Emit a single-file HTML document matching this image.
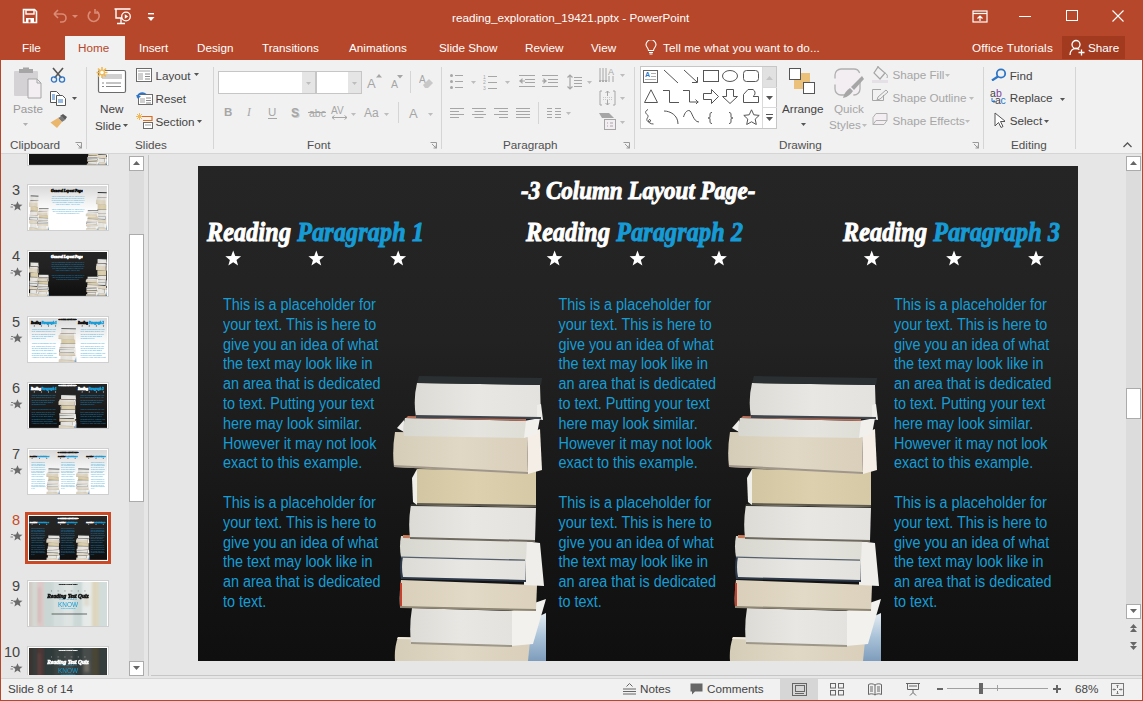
<!DOCTYPE html>
<html><head><meta charset="utf-8">
<style>
*{margin:0;padding:0;box-sizing:border-box}
html,body{width:1143px;height:701px;overflow:hidden;background:#B7472A;font-family:"Liberation Sans",sans-serif;position:relative}
.a{position:absolute}
.t{position:absolute;white-space:nowrap}
</style></head><body>
<div class="a" style="left:1px;top:60px;width:1141px;height:640px;background:#E6E6E6"></div>
<div class="a" style="left:1px;top:60px;width:1141px;height:94px;background:#F1F1F1;border-bottom:1px solid #D5D5D5"></div>
<div class="a" style="left:1062px;top:36px;width:63px;height:23px;background:#A23A20"></div><svg class="a" style="left:22px;top:8px" width="16" height="16" viewBox="0 0 16 16"><path d="M1.5 1.5h11l2 2v11h-13z" fill="none" stroke="#fff" stroke-width="1.6"/><rect x="4" y="2" width="8" height="4" fill="none" stroke="#fff" stroke-width="1.4"/><rect x="4" y="10" width="8" height="5" fill="#fff"/><rect x="6.5" y="11.5" width="2" height="3" fill="#B7472A"/></svg><svg class="a" style="left:51px;top:8px" width="28" height="16" viewBox="0 0 28 16"><path d="M3 6h8a4 4 0 0 1 0 8h-2M3 6l4-4M3 6l4 4" fill="none" stroke="#D98B76" stroke-width="1.6"/><path d="M21 7l3 3 3-3z" fill="#D98B76"/></svg><svg class="a" style="left:86px;top:8px" width="16" height="16" viewBox="0 0 16 16"><path d="M10.5 3.2A5.5 5.5 0 1 1 4.5 3.5" fill="none" stroke="#D98B76" stroke-width="1.6"/><path d="M9 1v4h4" fill="none" stroke="#D98B76" stroke-width="1.6"/></svg><svg class="a" style="left:114px;top:8px" width="18" height="17" viewBox="0 0 18 17"><path d="M0.5 1h16M2 1v9h6" fill="none" stroke="#fff" stroke-width="1.4"/><circle cx="12" cy="8.5" r="4.3" fill="none" stroke="#fff" stroke-width="1.3"/><path d="M10.8 6.3v4.4l3.4-2.2z" fill="#fff"/><path d="M3 15.5h8M7 10v5" fill="none" stroke="#fff" stroke-width="1.3"/></svg><svg class="a" style="left:147px;top:13px" width="8" height="9" viewBox="0 0 8 9"><rect x="1" y="0" width="6" height="1.4" fill="#fff"/><path d="M0.5 4h7l-3.5 4z" fill="#fff"/></svg><div class="t" style="left:452px;top:12.30px;font-size:11.7px;line-height:11.7px;color:#fff;">reading_exploration_19421.pptx - PowerPoint</div><svg class="a" style="left:972px;top:10px" width="16" height="13" viewBox="0 0 16 13"><rect x="1" y="1" width="14" height="11" fill="none" stroke="#fff" stroke-width="1.2"/><path d="M1 3.5h14" stroke="#fff" stroke-width="1.2"/><path d="M8 11V6M5.5 8.5L8 6l2.5 2.5" fill="none" stroke="#fff" stroke-width="1.2"/></svg><div class="a" style="left:1019px;top:16px;width:12px;height:1px;background:#fff"></div><div class="a" style="left:1066px;top:10px;width:12px;height:11px;border:1px solid #fff"></div><svg class="a" style="left:1112px;top:10px" width="12" height="12" viewBox="0 0 12 12"><path d="M0.5 0.5l11 11M11.5 0.5l-11 11" stroke="#fff" stroke-width="1.1"/></svg><div class="a" style="left:65px;top:36px;width:60px;height:24px;background:#F1F1F1"></div><div class="t" style="left:22px;top:41.90px;font-size:11.7px;line-height:11.7px;color:#fff;">File</div><div class="t" style="left:139px;top:41.90px;font-size:11.7px;line-height:11.7px;color:#fff;">Insert</div><div class="t" style="left:197px;top:41.90px;font-size:11.7px;line-height:11.7px;color:#fff;">Design</div><div class="t" style="left:262px;top:41.90px;font-size:11.7px;line-height:11.7px;color:#fff;">Transitions</div><div class="t" style="left:349px;top:41.90px;font-size:11.7px;line-height:11.7px;color:#fff;">Animations</div><div class="t" style="left:439px;top:41.90px;font-size:11.7px;line-height:11.7px;color:#fff;">Slide Show</div><div class="t" style="left:525px;top:41.90px;font-size:11.7px;line-height:11.7px;color:#fff;">Review</div><div class="t" style="left:591px;top:41.90px;font-size:11.7px;line-height:11.7px;color:#fff;">View</div><div class="t" style="left:1088px;top:41.90px;font-size:11.7px;line-height:11.7px;color:#fff;">Share</div><div class="t" style="left:663px;top:41.90px;font-size:11.7px;line-height:11.7px;color:#fff;letter-spacing:0.1px">Tell me what you want to do...</div><div class="t" style="left:972px;top:41.90px;font-size:11.7px;line-height:11.7px;color:#fff;letter-spacing:0.2px">Office Tutorials</div><div class="t" style="left:78px;top:41.90px;font-size:11.7px;line-height:11.7px;color:#B7472A;">Home</div><svg class="a" style="left:645px;top:40px" width="12" height="15" viewBox="0 0 12 15"><path d="M3.5 10.5C3.5 8 1 7 1 4.8A5 5 0 0 1 11 4.8C11 7 8.5 8 8.5 10.5z" fill="none" stroke="#fff" stroke-width="1.1"/><path d="M4 12.5h4M4.5 14h3" stroke="#fff" stroke-width="1.1"/></svg><svg class="a" style="left:1069px;top:39px" width="16" height="17" viewBox="0 0 16 17"><circle cx="7" cy="5.5" r="4" fill="none" stroke="#fff" stroke-width="1.3"/><path d="M1 16c0-4 2.5-6.5 6-6.5 1.5 0 2.5.4 3.3 1" fill="none" stroke="#fff" stroke-width="1.3"/><path d="M12.5 10.5v6M9.5 13.5h6" stroke="#fff" stroke-width="1.3"/></svg>
<div class="a" style="left:86px;top:67px;width:1px;height:82px;background:#D5D5D5"></div><div class="a" style="left:213px;top:67px;width:1px;height:82px;background:#D5D5D5"></div><div class="a" style="left:441px;top:67px;width:1px;height:82px;background:#D5D5D5"></div><div class="a" style="left:634px;top:67px;width:1px;height:82px;background:#D5D5D5"></div><div class="a" style="left:983px;top:67px;width:1px;height:82px;background:#D5D5D5"></div><div class="a" style="left:1075px;top:67px;width:1px;height:82px;background:#D5D5D5"></div><div class="t" style="left:10px;top:138.60px;font-size:11.7px;line-height:11.7px;color:#505050;">Clipboard</div><div class="t" style="left:135px;top:138.60px;font-size:11.7px;line-height:11.7px;color:#505050;">Slides</div><div class="t" style="left:307px;top:138.60px;font-size:11.7px;line-height:11.7px;color:#505050;">Font</div><div class="t" style="left:503px;top:138.60px;font-size:11.7px;line-height:11.7px;color:#505050;">Paragraph</div><div class="t" style="left:779px;top:138.60px;font-size:11.7px;line-height:11.7px;color:#505050;">Drawing</div><div class="t" style="left:1011px;top:138.60px;font-size:11.7px;line-height:11.7px;color:#505050;">Editing</div><svg class="a" style="left:75px;top:142px" width="7" height="7" viewBox="0 0 7 7"><path d="M0.5 0.5h6v6" fill="none" stroke="#999" stroke-width="1"/><path d="M2 2l4 4M6 3.5V6H3.5" fill="none" stroke="#999"/></svg><svg class="a" style="left:430px;top:142px" width="7" height="7" viewBox="0 0 7 7"><path d="M0.5 0.5h6v6" fill="none" stroke="#999" stroke-width="1"/><path d="M2 2l4 4M6 3.5V6H3.5" fill="none" stroke="#999"/></svg><svg class="a" style="left:623px;top:142px" width="7" height="7" viewBox="0 0 7 7"><path d="M0.5 0.5h6v6" fill="none" stroke="#999" stroke-width="1"/><path d="M2 2l4 4M6 3.5V6H3.5" fill="none" stroke="#999"/></svg><svg class="a" style="left:972px;top:142px" width="7" height="7" viewBox="0 0 7 7"><path d="M0.5 0.5h6v6" fill="none" stroke="#999" stroke-width="1"/><path d="M2 2l4 4M6 3.5V6H3.5" fill="none" stroke="#999"/></svg><svg class="a" style="left:13px;top:67px" width="30" height="32" viewBox="0 0 30 32"><rect x="1" y="4" width="24" height="25" rx="1" fill="#D4D2D4"/><path d="M6 6h14V2h-4V0.5h-6V2H6z" fill="#A6A6A6"/><path d="M15 12h9l4 4v15H15z" fill="#F2EEF2" stroke="#A6A6A6" stroke-width="1"/><path d="M24 12v4h4" fill="none" stroke="#A6A6A6"/></svg><div class="t" style="left:13px;top:102.90px;font-size:11.7px;line-height:11.7px;color:#999;">Paste</div><svg class="a" style="left:23px;top:123px" width="5" height="3" viewBox="0 0 5 3"><path d="M0 0h5l-2.5 3z" fill="#B0B0B0"/></svg><svg class="a" style="left:50px;top:67px" width="16" height="16" viewBox="0 0 16 16"><path d="M3 1l8.5 10M13 1L4.5 11" stroke="#555" stroke-width="1.6"/><circle cx="4" cy="12.5" r="2.6" fill="none" stroke="#2E75C6" stroke-width="1.3"/><circle cx="12" cy="12.5" r="2.6" fill="none" stroke="#2E75C6" stroke-width="1.3"/></svg><svg class="a" style="left:50px;top:91px" width="16" height="15" viewBox="0 0 16 15"><path d="M0.5 0.5h6l3 3v8H0.5z" fill="#fff" stroke="#555"/><path d="M6.5 4.5h6l3 3v7h-9z" fill="#fff" stroke="#555"/><path d="M2 4h3M2 6h3M2 8h3M8 9h5M8 11h5" stroke="#2E75C6"/></svg><svg class="a" style="left:72px;top:97px" width="5" height="3" viewBox="0 0 5 3"><path d="M0 0h5l-2.5 3z" fill="#555"/></svg><svg class="a" style="left:50px;top:114px" width="17" height="14" viewBox="0 0 17 14"><path d="M10 2l3-2 4 3-2 3z" fill="#595959"/><path d="M8 4l4-2 3 4-3 2z" fill="#7a7a7a"/><path d="M0.5 8.5l7.5-4.5 4 4-5 6z" fill="#E9B66B"/></svg><svg class="a" style="left:96px;top:66px" width="31" height="28" viewBox="0 0 31 28"><rect x="2.5" y="4.5" width="27" height="22" rx="1.5" fill="#fff" stroke="#6b6b6b" stroke-width="1.2"/><rect x="6" y="8" width="20" height="5" fill="#D0D0D0"/><path d="M6 17h2M10 17h15M6 20.5h2M10 20.5h15" stroke="#888" stroke-width="1"/><g stroke="#F0B955" stroke-width="1.6"><path d="M6 1v11M0.5 6.5h11M2 2.5l8 8M10 2.5l-8 8"/></g><circle cx="6" cy="6.5" r="2.4" fill="#fff" stroke="#F0B955" stroke-width="1.2"/></svg><div class="t" style="left:100px;top:103.00px;font-size:11.7px;line-height:11.7px;color:#444;">New</div><div class="t" style="left:95px;top:119.50px;font-size:11.7px;line-height:11.7px;color:#444;">Slide</div><svg class="a" style="left:123px;top:124px" width="5" height="3" viewBox="0 0 5 3"><path d="M0 0h5l-2.5 3z" fill="#555"/></svg><svg class="a" style="left:136px;top:68px" width="16" height="14" viewBox="0 0 16 14"><rect x="0.5" y="0.5" width="15" height="13" fill="#fff" stroke="#6b6b6b"/><rect x="2" y="2" width="12" height="2" fill="#D0D0D0"/><rect x="2" y="5" width="5" height="7" fill="#D0D0D0"/><path d="M9 6h5M9 8.5h5M9 11h5" stroke="#888"/></svg><div class="t" style="left:155.5px;top:70.00px;font-size:11.7px;line-height:11.7px;color:#444;">Layout</div><svg class="a" style="left:194px;top:73px" width="5" height="3" viewBox="0 0 5 3"><path d="M0 0h5l-2.5 3z" fill="#555"/></svg><svg class="a" style="left:136px;top:91px" width="17" height="14" viewBox="0 0 17 14"><rect x="2.5" y="3.5" width="14" height="10" fill="#fff" stroke="#6b6b6b"/><rect x="4" y="7" width="5" height="5" fill="#D0D0D0"/><path d="M10 7h5M10 9.5h5M10 12h5" stroke="#888"/><path d="M1.5 6.5C2 2 7 1 10 3.5" fill="none" stroke="#2E75C6" stroke-width="1.6"/><path d="M0 4l2 4 3-3z" fill="#2E75C6"/></svg><div class="t" style="left:155.5px;top:93.10px;font-size:11.7px;line-height:11.7px;color:#444;">Reset</div><svg class="a" style="left:136px;top:113px" width="17" height="16" viewBox="0 0 17 16"><g stroke="#F0B955" stroke-width="1"><path d="M3.5 0v7M0 3.5h7M1 1l5 5M6 1l-5 5"/></g><path d="M6 3.5h10v4H7" fill="none" stroke="#E06C1B" stroke-width="1.2"/><rect x="7.5" y="9.5" width="9" height="6" fill="#fff" stroke="#6b6b6b"/><rect x="9" y="11" width="6" height="2" fill="#D0D0D0"/></svg><div class="t" style="left:155.5px;top:115.90px;font-size:11.7px;line-height:11.7px;color:#444;">Section</div><svg class="a" style="left:197px;top:120px" width="5" height="3" viewBox="0 0 5 3"><path d="M0 0h5l-2.5 3z" fill="#555"/></svg><div class="a" style="left:218px;top:71px;width:98px;height:23px;background:#fff;border:1px solid #C6C6C6"></div><div class="a" style="left:302px;top:72px;width:13px;height:21px;background:#E5E5E5"></div><svg class="a" style="left:306px;top:82px" width="5" height="3" viewBox="0 0 5 3"><path d="M0 0h5l-2.5 3z" fill="#BDBDBD"/></svg><div class="a" style="left:316px;top:71px;width:46px;height:23px;background:#fff;border:1px solid #C6C6C6"></div><div class="a" style="left:348px;top:72px;width:13px;height:21px;background:#E5E5E5"></div><svg class="a" style="left:352px;top:82px" width="5" height="3" viewBox="0 0 5 3"><path d="M0 0h5l-2.5 3z" fill="#BDBDBD"/></svg><div class="t" style="left:367px;top:77.00px;font-size:13px;line-height:13px;color:#A6A6A6;">A</div><svg class="a" style="left:376px;top:74px" width="6" height="4" viewBox="0 0 6 4"><path d="M0 3.5L3 0l3 3.5z" fill="#A6A6A6"/></svg><div class="t" style="left:391px;top:79.11px;font-size:10.5px;line-height:10.5px;color:#A6A6A6;">A</div><svg class="a" style="left:397px;top:75px" width="6" height="4" viewBox="0 0 6 4"><path d="M0 0h6L3 3.5z" fill="#A6A6A6"/></svg><div class="a" style="left:410px;top:71px;width:1px;height:22px;background:#D5D5D5"></div><svg class="a" style="left:419px;top:74px" width="15" height="15" viewBox="0 0 15 15"><text x="0" y="9" font-family="Liberation Sans" font-size="10" fill="#A6A6A6">A</text><path d="M4 11l6-6 4 4-5 5H6z" fill="#C8C8C8"/></svg><div class="t" style="left:224px;top:107.27px;font-size:11.5px;line-height:11.5px;color:#A6A6A6;font-weight:bold">B</div><div class="t" style="left:247px;top:107.27px;font-size:11.5px;line-height:11.5px;color:#A6A6A6;font-style:italic;font-family:Liberation Serif">I</div><div class="t" style="left:268px;top:107.27px;font-size:11.5px;line-height:11.5px;color:#A6A6A6;">U</div><div class="a" style="left:268px;top:118px;width:9px;height:1px;background:#A6A6A6"></div><div class="t" style="left:292px;top:108.34px;font-size:12px;line-height:12px;color:#C9C9C9;font-weight:bold">S</div><div class="t" style="left:291px;top:106.84px;font-size:12px;line-height:12px;color:#A6A6A6;font-weight:bold">S</div><div class="t" style="left:309px;top:108.11px;font-size:10.5px;line-height:10.5px;color:#A6A6A6;">abc</div><div class="a" style="left:308px;top:112px;width:18px;height:1px;background:#A6A6A6"></div><div class="t" style="left:331px;top:105.53px;font-size:10px;line-height:10px;color:#A6A6A6;">AV</div><svg class="a" style="left:331px;top:115px" width="17" height="5" viewBox="0 0 17 5"><path d="M1 2.5h15M3.5 0.5L1 2.5l2.5 2M13.5 0.5L16 2.5l-2.5 2" fill="none" stroke="#A6A6A6"/></svg><svg class="a" style="left:351px;top:113px" width="5" height="3" viewBox="0 0 5 3"><path d="M0 0h5l-2.5 3z" fill="#BDBDBD"/></svg><div class="t" style="left:364px;top:106.84px;font-size:12px;line-height:12px;color:#A6A6A6;">Aa</div><svg class="a" style="left:384px;top:113px" width="5" height="3" viewBox="0 0 5 3"><path d="M0 0h5l-2.5 3z" fill="#BDBDBD"/></svg><div class="a" style="left:398px;top:102px;width:1px;height:21px;background:#D5D5D5"></div><div class="t" style="left:409px;top:107.00px;font-size:13px;line-height:13px;color:#A6A6A6;">A</div><svg class="a" style="left:428px;top:113px" width="5" height="3" viewBox="0 0 5 3"><path d="M0 0h5l-2.5 3z" fill="#BDBDBD"/></svg><svg class="a" style="left:450px;top:74px" width="13" height="15" viewBox="0 0 13 15"><g fill="#A6A6A6"><circle cx="1.5" cy="1.5" r="1.5"/><circle cx="1.5" cy="7.5" r="1.5"/><circle cx="1.5" cy="13.5" r="1.5"/></g><path d="M5 1.5h8M5 7.5h8M5 13.5h8" stroke="#A6A6A6"/></svg><svg class="a" style="left:471px;top:81px" width="5" height="3" viewBox="0 0 5 3"><path d="M0 0h5l-2.5 3z" fill="#BDBDBD"/></svg><svg class="a" style="left:483px;top:74px" width="15" height="16" viewBox="0 0 15 16"><text x="0" y="5" font-size="5" font-family="Liberation Sans" fill="#A6A6A6">1</text><text x="0" y="10" font-size="5" font-family="Liberation Sans" fill="#A6A6A6">2</text><text x="0" y="15.5" font-size="5" font-family="Liberation Sans" fill="#A6A6A6">3</text><path d="M5 2.5h9M5 8.5h9M5 14.5h9" stroke="#A6A6A6"/></svg><svg class="a" style="left:505px;top:81px" width="5" height="3" viewBox="0 0 5 3"><path d="M0 0h5l-2.5 3z" fill="#BDBDBD"/></svg><svg class="a" style="left:519px;top:74px" width="17" height="14" viewBox="0 0 17 14"><path d="M0 1.5h16M6 5.5h10M6 8.5h10M0 12.5h16" stroke="#A6A6A6"/><path d="M0 7l3.5-3v6z" fill="#A6A6A6"/><path d="M3 7h3" stroke="#A6A6A6"/></svg><svg class="a" style="left:542px;top:74px" width="17" height="14" viewBox="0 0 17 14"><path d="M0 1.5h16M6 5.5h10M6 8.5h10M0 12.5h16" stroke="#A6A6A6"/><path d="M5 7l-3.5-3v6z" fill="#A6A6A6"/><path d="M0 7h3" stroke="#A6A6A6"/></svg><svg class="a" style="left:567px;top:74px" width="15" height="16" viewBox="0 0 15 16"><path d="M3 1v14M0.5 3.5L3 1l2.5 2.5M0.5 12.5L3 15l2.5-2.5" fill="none" stroke="#A6A6A6" stroke-width="1.2"/><path d="M7 3.5h8M7 6.5h8M7 9.5h8M7 12.5h8" stroke="#A6A6A6"/></svg><svg class="a" style="left:587px;top:81px" width="5" height="3" viewBox="0 0 5 3"><path d="M0 0h5l-2.5 3z" fill="#BDBDBD"/></svg><svg class="a" style="left:599px;top:66px" width="17" height="17" viewBox="0 0 17 17"><path d="M1 2v14M4 2v14M7 2v14" stroke="#A6A6A6"/><path d="M0 14l1 2 1-2M3 14l1 2 1-2M6 14l1 2 1-2" fill="none" stroke="#A6A6A6"/><text x="9" y="9" font-size="9" font-family="Liberation Sans" fill="#A6A6A6">A</text><path d="M10 10v6M14 10v6" stroke="#A6A6A6"/></svg><svg class="a" style="left:620px;top:74px" width="5" height="3" viewBox="0 0 5 3"><path d="M0 0h5l-2.5 3z" fill="#BDBDBD"/></svg><svg class="a" style="left:599px;top:90px" width="17" height="16" viewBox="0 0 17 16"><path d="M3 1H1v14h2M14 1h2v14h-2" fill="none" stroke="#A6A6A6"/><path d="M8.5 1v5M6.5 3l2-2 2 2M8.5 10v5M6.5 13l2 2 2-2" fill="none" stroke="#A6A6A6"/><path d="M4 7.5h9M4 9.5h9" stroke="#C8C8C8" stroke-dasharray="1 1"/></svg><svg class="a" style="left:620px;top:97px" width="5" height="3" viewBox="0 0 5 3"><path d="M0 0h5l-2.5 3z" fill="#BDBDBD"/></svg><svg class="a" style="left:599px;top:113px" width="17" height="17" viewBox="0 0 17 17"><path d="M0 0h10l5 5H3z" fill="#A6A6A6"/><rect x="5.5" y="6.5" width="11" height="10" fill="#F2EEF2" stroke="#A6A6A6"/><path d="M8 10h1M11 10h3M8 13h1M11 13h3" stroke="#A6A6A6"/></svg><svg class="a" style="left:620px;top:121px" width="5" height="3" viewBox="0 0 5 3"><path d="M0 0h5l-2.5 3z" fill="#BDBDBD"/></svg><svg class="a" style="left:450px;top:107px" width="14" height="12" viewBox="0 0 14 12"><path d="M0 1.5H14" stroke="#A6A6A6"/><path d="M0 4.5H9" stroke="#A6A6A6"/><path d="M0 7.5H14" stroke="#A6A6A6"/><path d="M0 10.5H9" stroke="#A6A6A6"/></svg><svg class="a" style="left:472px;top:107px" width="14" height="12" viewBox="0 0 14 12"><path d="M0 1.5H14" stroke="#A6A6A6"/><path d="M2.5 4.5H11.5" stroke="#A6A6A6"/><path d="M0 7.5H14" stroke="#A6A6A6"/><path d="M2.5 10.5H11.5" stroke="#A6A6A6"/></svg><svg class="a" style="left:494px;top:107px" width="14" height="12" viewBox="0 0 14 12"><path d="M0 1.5H14" stroke="#A6A6A6"/><path d="M5 4.5H14" stroke="#A6A6A6"/><path d="M0 7.5H14" stroke="#A6A6A6"/><path d="M5 10.5H14" stroke="#A6A6A6"/></svg><svg class="a" style="left:516px;top:107px" width="14" height="12" viewBox="0 0 14 12"><path d="M0 1.5H14" stroke="#A6A6A6"/><path d="M0 4.5H14" stroke="#A6A6A6"/><path d="M0 7.5H14" stroke="#A6A6A6"/><path d="M0 10.5H14" stroke="#A6A6A6"/></svg><div class="a" style="left:538px;top:102px;width:1px;height:22px;background:#D5D5D5"></div><svg class="a" style="left:547px;top:107px" width="14" height="12" viewBox="0 0 14 12"><path d="M0 1.5h5M8 1.5h6M0 4.5h5M8 4.5h6M0 7.5h5M8 7.5h6M0 10.5h5M8 10.5h6" stroke="#A6A6A6"/></svg><svg class="a" style="left:566px;top:112px" width="5" height="3" viewBox="0 0 5 3"><path d="M0 0h5l-2.5 3z" fill="#BDBDBD"/></svg><div class="a" style="left:640px;top:66px;width:137px;height:63px;background:#fff;border:1px solid #C6C6C6"></div><div class="a" style="left:762px;top:67px;width:14px;height:21px;background:#E1E1E1;border-left:1px solid #DADADA"></div><div class="a" style="left:762px;top:87px;width:15px;height:1px;background:#DADADA"></div><div class="a" style="left:762px;top:107px;width:15px;height:1px;background:#DADADA"></div><div class="a" style="left:762px;top:67px;width:1px;height:61px;background:#DADADA"></div><svg class="a" style="left:766px;top:76px" width="7" height="4" viewBox="0 0 7 4"><path d="M0 4L3.5 0 7 4z" fill="#C4C4C4"/></svg><svg class="a" style="left:766px;top:96px" width="7" height="4" viewBox="0 0 7 4"><path d="M0 0h7L3.5 4z" fill="#555"/></svg><svg class="a" style="left:766px;top:114px" width="7" height="7" viewBox="0 0 7 7"><path d="M0 0.5h7" stroke="#555"/><path d="M0 3h7L3.5 7z" fill="#555"/></svg><svg class="a" style="left:643px;top:70px" width="16" height="13" viewBox="0 0 16 13"><rect x="0.5" y="0.5" width="14" height="12" fill="#fff" stroke="#666"/><text x="2" y="7" font-size="7" font-weight="bold" font-family="Liberation Sans" fill="#2E75C6">A</text><path d="M8 3.5h5M8 6.5h5M2 9.5h11" stroke="#999" stroke-width="0.8"/></svg><svg class="a" style="left:663px;top:69px" width="16" height="15" viewBox="0 0 16 15"><path d="M1 1l14 13" stroke="#555"/></svg><svg class="a" style="left:683px;top:69px" width="16" height="15" viewBox="0 0 16 15"><path d="M1 1l13 12M9 13.5h5.5V8" fill="none" stroke="#555"/></svg><svg class="a" style="left:703px;top:70px" width="17" height="13" viewBox="0 0 17 13"><rect x="0.5" y="0.5" width="15" height="11" fill="none" stroke="#555"/></svg><svg class="a" style="left:722px;top:70px" width="17" height="13" viewBox="0 0 17 13"><ellipse cx="8" cy="6" rx="7.5" ry="5.5" fill="none" stroke="#555"/></svg><svg class="a" style="left:743px;top:70px" width="17" height="13" viewBox="0 0 17 13"><rect x="0.5" y="0.5" width="15" height="11" rx="3" fill="none" stroke="#555"/></svg><svg class="a" style="left:644px;top:89px" width="15" height="15" viewBox="0 0 15 15"><path d="M7 0.8L13.5 13.5H0.5z" fill="none" stroke="#555"/></svg><svg class="a" style="left:663px;top:89px" width="17" height="15" viewBox="0 0 17 15"><path d="M0 1.5h6.5v12h9.5" fill="none" stroke="#555"/></svg><svg class="a" style="left:683px;top:89px" width="17" height="15" viewBox="0 0 17 15"><path d="M0 1.5h6.5v11.5h9M12.5 10.5l2.5 2.5-2.5 2.5" fill="none" stroke="#555"/></svg><svg class="a" style="left:703px;top:89px" width="17" height="15" viewBox="0 0 17 15"><path d="M0.5 4.5h8v-4l7 7-7 7v-4h-8z" fill="none" stroke="#555"/></svg><svg class="a" style="left:722px;top:89px" width="17" height="15" viewBox="0 0 17 15"><path d="M4.5 0.5h7v7h4l-7.5 7-7.5-7h4z" fill="none" stroke="#555"/></svg><svg class="a" style="left:743px;top:89px" width="17" height="15" viewBox="0 0 17 15"><path d="M0.5 5.5L5 0.5h5a4 4 0 0 1 0 7h5.5v6H0.5z" fill="none" stroke="#555"/></svg><svg class="a" style="left:644px;top:109px" width="12" height="16" viewBox="0 0 12 16"><path d="M4 0.5C1 2 1 4 3 5.5 6 7.5 2 9 3 11.5c1 2 3 2 3.5 0.5 0.5-2-2-2-2 0 0 1.5 2 3 5 3" fill="none" stroke="#555"/></svg><svg class="a" style="left:663px;top:110px" width="17" height="14" viewBox="0 0 17 14"><path d="M1 1c6 0 14 4 14 13" fill="none" stroke="#555"/></svg><svg class="a" style="left:683px;top:109px" width="17" height="15" viewBox="0 0 17 15"><path d="M0.5 8C2 3 4 1.5 6 1.5 9 1.5 10 13 16 13" fill="none" stroke="#555"/></svg><svg class="a" style="left:707px;top:112px" width="6" height="12" viewBox="0 0 6 12"><path d="M5 0.5C3 0.5 3 1.5 3 3v2c0 1-1 1-2 1 1 0 2 0 2 1v2c0 1.5 0 2.5 2 2.5" fill="none" stroke="#555"/></svg><svg class="a" style="left:728px;top:112px" width="6" height="12" viewBox="0 0 6 12"><path d="M1 0.5C3 0.5 3 1.5 3 3v2c0 1 1 1 2 1-1 0-2 0-2 1v2c0 1.5 0 2.5-2 2.5" fill="none" stroke="#555"/></svg><svg class="a" style="left:743px;top:109px" width="17" height="16" viewBox="0 0 17 16"><path d="M8.5 0.8l2.3 5 5.4.6-4 3.7 1.1 5.4-4.8-2.7-4.8 2.7 1.1-5.4-4-3.7 5.4-.6z" fill="none" stroke="#555"/></svg><svg class="a" style="left:788px;top:67px" width="29" height="29" viewBox="0 0 29 29"><rect x="6" y="6" width="16" height="16" fill="#EBC17A"/><rect x="1.5" y="1.5" width="11" height="11" fill="#fff" stroke="#555"/><rect x="15.5" y="15.5" width="11" height="11" fill="#fff" stroke="#555"/></svg><div class="t" style="left:782px;top:102.60px;font-size:11.7px;line-height:11.7px;color:#444;">Arrange</div><svg class="a" style="left:801px;top:123px" width="5" height="3" viewBox="0 0 5 3"><path d="M0 0h5l-2.5 3z" fill="#555"/></svg><svg class="a" style="left:834px;top:68px" width="31" height="31" viewBox="0 0 31 31"><rect x="1" y="1" width="25" height="26" rx="6" fill="#F2EEF2" stroke="#B0B0B0" stroke-width="1.3" stroke-dasharray="20 6"/><path d="M29 9L14 24l-4 6H28" fill="none"/><path d="M28 8l2 3-10 11-3-3z" fill="#A6A6A6"/><path d="M16 20l3 3c-2 3-5 6-10 7 1-5 4-8 7-10z" fill="#A6A6A6"/></svg><div class="t" style="left:834px;top:102.90px;font-size:11.7px;line-height:11.7px;color:#A6A6A6;">Quick</div><div class="t" style="left:829px;top:119.40px;font-size:11.7px;line-height:11.7px;color:#A6A6A6;">Styles</div><svg class="a" style="left:862px;top:124px" width="5" height="3" viewBox="0 0 5 3"><path d="M0 0h5l-2.5 3z" fill="#BDBDBD"/></svg><svg class="a" style="left:872px;top:66px" width="18" height="17" viewBox="0 0 18 17"><path d="M6 1l7 6-5 6-6-6z" fill="none" stroke="#A6A6A6" stroke-width="1.2"/><path d="M6 1V0" stroke="#A6A6A6"/><path d="M13 7c2 1 3 3 2 5" fill="none" stroke="#A6A6A6"/><rect x="0" y="14" width="16" height="3" fill="#E5E0E5"/></svg><div class="t" style="left:892.4px;top:69.00px;font-size:11.7px;line-height:11.7px;color:#A6A6A6;">Shape Fill</div><svg class="a" style="left:945px;top:74px" width="5" height="3" viewBox="0 0 5 3"><path d="M0 0h5l-2.5 3z" fill="#BDBDBD"/></svg><svg class="a" style="left:872px;top:89px" width="16" height="12" viewBox="0 0 16 12"><path d="M9 0.5H0.5v11h11V6" fill="none" stroke="#A6A6A6"/><path d="M6 8l8-7 2 2-8 7-3 1z" fill="none" stroke="#A6A6A6"/></svg><div class="t" style="left:892.4px;top:91.80px;font-size:11.7px;line-height:11.7px;color:#A6A6A6;">Shape Outline</div><svg class="a" style="left:969px;top:97px" width="5" height="3" viewBox="0 0 5 3"><path d="M0 0h5l-2.5 3z" fill="#BDBDBD"/></svg><svg class="a" style="left:872px;top:113px" width="16" height="12" viewBox="0 0 16 12"><path d="M4 0.5h11v7L12 11.5H1v-7z" fill="#F2EEF2" stroke="#B0B0B0"/><path d="M1 11.5l3-4h11" fill="none" stroke="#B0B0B0"/></svg><div class="t" style="left:892.4px;top:114.70px;font-size:11.7px;line-height:11.7px;color:#A6A6A6;">Shape Effects</div><svg class="a" style="left:965px;top:120px" width="5" height="3" viewBox="0 0 5 3"><path d="M0 0h5l-2.5 3z" fill="#BDBDBD"/></svg><svg class="a" style="left:991px;top:68px" width="16" height="13" viewBox="0 0 16 13"><circle cx="10" cy="5.5" r="4.2" fill="none" stroke="#2E75C6" stroke-width="1.8"/><path d="M7 8.5L1 12.5" stroke="#2E75C6" stroke-width="2.2"/></svg><div class="t" style="left:1009.7px;top:69.50px;font-size:11.7px;line-height:11.7px;color:#444;">Find</div><svg class="a" style="left:990px;top:88px" width="18" height="17" viewBox="0 0 18 17"><text x="0" y="8.5" font-size="10.5" font-family="Liberation Sans" fill="#444">a</text><text x="6" y="8.5" font-size="10.5" font-family="Liberation Sans" fill="#7B3FA0">b</text><text x="5" y="16" font-size="10.5" font-family="Liberation Sans" fill="#444">a</text><text x="10.5" y="16" font-size="10.5" font-family="Liberation Sans" fill="#2E75C6">c</text><path d="M2 10v3.5h3M3.5 12l1.5 1.5L3.5 15" fill="none" stroke="#2E75C6"/></svg><div class="t" style="left:1009.7px;top:92.30px;font-size:11.7px;line-height:11.7px;color:#444;">Replace</div><svg class="a" style="left:1060px;top:98px" width="5" height="3" viewBox="0 0 5 3"><path d="M0 0h5l-2.5 3z" fill="#555"/></svg><svg class="a" style="left:994px;top:112px" width="11" height="16" viewBox="0 0 11 16"><path d="M1 1v13l3.5-3.5 2.5 5 2-1-2.5-5h5z" fill="#fff" stroke="#555"/></svg><div class="t" style="left:1009.7px;top:115.10px;font-size:11.7px;line-height:11.7px;color:#444;">Select</div><svg class="a" style="left:1044px;top:120px" width="5" height="3" viewBox="0 0 5 3"><path d="M0 0h5l-2.5 3z" fill="#555"/></svg><svg class="a" style="left:1123px;top:142px" width="9" height="6" viewBox="0 0 9 6"><path d="M0.5 5L4.5 1l4 4" fill="none" stroke="#555" stroke-width="1.3"/></svg>
<div class="a" style="left:1px;top:154px;width:127px;height:521px;overflow:hidden"><div class="a" style="left:-1px;top:-154px;width:1143px;height:701px"><div class="a" style="left:27px;top:119px;width:82px;height:47px;background:#fff;border:1px solid #CFCFCF"></div><div class="a" style="left:29px;top:121px;width:78px;height:44px;overflow:hidden"><div class="a" style="left:0;top:0;width:880px;height:495px;transform:scale(0.08864);transform-origin:0 0"><div class="a" style="left:0;top:0;width:880px;height:495px;background:linear-gradient(#252525 0%,#222 35%,#151515 75%,#0f0f0f 100%)"></div><svg class="a" style="left:0;top:0" width="880" height="495"><g transform="translate(607.1,-225.8) scale(0.784,1.456)"><polygon points="329,456 348,447 348,495 329,495" fill="url(#gBlue)" /><path transform="translate(-198,-166)" d="M398 637 L530 641 L528 661 L395 661 Q394 648 398 637z" fill="url(#gCream)"/><polygon points="200,471 332,475 332,477 199,473" fill="#EFE9DA" /><polygon points="313,445 348,433 335,478 313,480" fill="#F2F1EE" /><path transform="translate(-198,-166)" d="M412 608 L512 611 L512 646 L411 643 Q409 626 412 608z" fill="url(#gWhite)"/><polygon points="213,476 314,479 314,481 213,478" fill="#9d978a" /><path transform="translate(-198,-166)" d="M401 580 L537 585 L536 611 L400 607 Q399 594 401 580z" fill="url(#gCream2)"/><polygon points="202,417 204,417 204,440 202,440" fill="#C8402E" /><polygon points="202,440 338,443 338,445 202,442" fill="#8f8774" /><polygon points="326,375 342,377 346,420 326,419" fill="#F0EEEA" /><path transform="translate(-198,-166)" d="M401 556 L526 559 L526 582 L401 579 Q399 568 401 556z" fill="#2E3A4A"/><path transform="translate(-198,-166)" d="M403 556.5 L526 559.5 L525.5 580 L403 577 Q401 567 403 556.5z" fill="url(#gWhite)"/><path transform="translate(-198,-166)" d="M401 536 L527 540 L526 561 L401 557 Q399 546 401 536z" fill="url(#gWhite2)"/><polygon points="205,369 329,372 329,375 205,372" fill="#C77A5A" /><path transform="translate(-198,-166)" d="M401 556.5 L525 559.5 L525 560.8 L401 557.8z" fill="#56606c"/><path transform="translate(-198,-166)" d="M411 505 L536 507 L535 541 L410 538 Q408 521 411 505z" fill="url(#gWhite)"/><polygon points="213,338 338,340 338,342 213,340" fill="#35352f" /><polygon points="212,371 337,374 337,376 212,373" fill="#6f6a60" /><polygon points="214,312 219,303 219,339 215,336" fill="#F1EFEA" /><polygon points="219,303 338,305 338,341 219,339" fill="url(#gTan)" /><polygon points="219,337 338,339 338,341 219,339" fill="#5f5a4f" /><polygon points="329,268 342,263 344,304 330,308" fill="#F4EEE6" /><path transform="translate(-198,-166)" d="M395 432 L527 434 L528 474 L394 467 Q392 450 395 432z" fill="url(#gCream)"/><polygon points="196,299 330,306 330,308 196,301" fill="#a0978a" /><polygon points="199,262 206,254 206,266" fill="#EEEDEA" /><polygon points="326,255 342,252 339,268 326,272" fill="#F1F0ED" /><path transform="translate(-198,-166)" d="M405 418 L526 421 L524 438 L404 436 Q402 427 405 418z" fill="url(#gWhite2)"/><polygon points="210,250 328,253 328,255 208,252" fill="#B8705A" /><path transform="translate(-198,-166)" d="M417 383 L540 385 L541 418 L416 417 Q413 400 417 383z" fill="url(#gWhite)"/><polygon points="339,239 343,238 345,254 339,253" fill="#EEEDEA" /><polygon points="221,210 344,212 343,219 219,217" fill="#2A3031" /><polygon points="218,249 343,251 343,253 218,252" fill="#40464c" /></g><g transform="translate(471.6,156.3) scale(0.915,0.684)"><polygon points="329,456 348,447 348,495 329,495" fill="url(#gBlue)" /><path transform="translate(-198,-166)" d="M398 637 L530 641 L528 661 L395 661 Q394 648 398 637z" fill="url(#gCream)"/><polygon points="200,471 332,475 332,477 199,473" fill="#EFE9DA" /><polygon points="313,445 348,433 335,478 313,480" fill="#F2F1EE" /><path transform="translate(-198,-166)" d="M412 608 L512 611 L512 646 L411 643 Q409 626 412 608z" fill="url(#gWhite)"/><polygon points="213,476 314,479 314,481 213,478" fill="#9d978a" /><path transform="translate(-198,-166)" d="M401 580 L537 585 L536 611 L400 607 Q399 594 401 580z" fill="url(#gCream2)"/><polygon points="202,417 204,417 204,440 202,440" fill="#C8402E" /><polygon points="202,440 338,443 338,445 202,442" fill="#8f8774" /><polygon points="326,375 342,377 346,420 326,419" fill="#F0EEEA" /><path transform="translate(-198,-166)" d="M401 556 L526 559 L526 582 L401 579 Q399 568 401 556z" fill="#2E3A4A"/><path transform="translate(-198,-166)" d="M403 556.5 L526 559.5 L525.5 580 L403 577 Q401 567 403 556.5z" fill="url(#gWhite)"/><path transform="translate(-198,-166)" d="M401 536 L527 540 L526 561 L401 557 Q399 546 401 536z" fill="url(#gWhite2)"/><polygon points="205,369 329,372 329,375 205,372" fill="#C77A5A" /><path transform="translate(-198,-166)" d="M401 556.5 L525 559.5 L525 560.8 L401 557.8z" fill="#56606c"/><path transform="translate(-198,-166)" d="M411 505 L536 507 L535 541 L410 538 Q408 521 411 505z" fill="url(#gWhite)"/><polygon points="213,338 338,340 338,342 213,340" fill="#35352f" /><polygon points="212,371 337,374 337,376 212,373" fill="#6f6a60" /><polygon points="214,312 219,303 219,339 215,336" fill="#F1EFEA" /><polygon points="219,303 338,305 338,341 219,339" fill="url(#gTan)" /><polygon points="219,337 338,339 338,341 219,339" fill="#5f5a4f" /><polygon points="329,268 342,263 344,304 330,308" fill="#F4EEE6" /><path transform="translate(-198,-166)" d="M395 432 L527 434 L528 474 L394 467 Q392 450 395 432z" fill="url(#gCream)"/><polygon points="196,299 330,306 330,308 196,301" fill="#a0978a" /><polygon points="199,262 206,254 206,266" fill="#EEEDEA" /><polygon points="326,255 342,252 339,268 326,272" fill="#F1F0ED" /><path transform="translate(-198,-166)" d="M405 418 L526 421 L524 438 L404 436 Q402 427 405 418z" fill="url(#gWhite2)"/><polygon points="210,250 328,253 328,255 208,252" fill="#B8705A" /><path transform="translate(-198,-166)" d="M417 383 L540 385 L541 418 L416 417 Q413 400 417 383z" fill="url(#gWhite)"/><polygon points="339,239 343,238 345,254 339,253" fill="#EEEDEA" /><polygon points="221,210 344,212 343,219 219,217" fill="#2A3031" /><polygon points="218,249 343,251 343,253 218,252" fill="#40464c" /></g></svg></div></div><div class="a" style="left:27px;top:184px;width:82px;height:47px;background:#fff;border:1px solid #CFCFCF"></div><div class="a" style="left:29px;top:186px;width:78px;height:44px;overflow:hidden"><div class="a" style="left:0;top:0;width:880px;height:495px;transform:scale(0.08864);transform-origin:0 0"><div class="a" style="left:0;top:0;width:880px;height:495px;background:linear-gradient(#d9d9d9 0%,#f4f4f4 40%,#fff 60%,#fff 100%)"></div><div class="t" style="left:248px;top:32.80px;font-family:'Liberation Serif';font-size:44px;line-height:44px;color:#111;font-weight:bold;font-style:italic;transform:scaleY(1.12);transform-origin:0 85%;-webkit-text-stroke-width:7px;letter-spacing:0.2px;letter-spacing:0;transform:scaleX(0.92) scaleY(1.1)">General Layout Page</div><div class="t" style="left:240px;top:108px;width:400px;text-align:center;font-size:17px;line-height:17px;color:#159DD6">This is a placeholder for your text. This is here to</div><div class="t" style="left:240px;top:132px;width:400px;text-align:center;font-size:17px;line-height:17px;color:#159DD6">give you an idea of what the text may look like in</div><div class="t" style="left:240px;top:156px;width:400px;text-align:center;font-size:17px;line-height:17px;color:#159DD6">an area that is dedicated to text. Putting your text</div><div class="t" style="left:240px;top:180px;width:400px;text-align:center;font-size:17px;line-height:17px;color:#159DD6">here may look similar. However it may not look</div><div class="t" style="left:240px;top:204px;width:400px;text-align:center;font-size:17px;line-height:17px;color:#159DD6">exact to this example. Your text here.</div><div class="t" style="left:240px;top:252px;width:400px;text-align:center;font-size:17px;line-height:17px;color:#159DD6">This is a placeholder for your text. This is here to</div><div class="t" style="left:240px;top:276px;width:400px;text-align:center;font-size:17px;line-height:17px;color:#159DD6">give you an idea of what the text may look like</div><div class="t" style="left:240px;top:300px;width:400px;text-align:center;font-size:17px;line-height:17px;color:#159DD6">in an area that is dedicated to text.</div><svg class="a" style="left:0;top:0" width="880" height="495"><g transform="translate(-140.2,-180.6) scale(0.719,1.365)"><polygon points="329,456 348,447 348,495 329,495" fill="url(#gBlue)" /><path transform="translate(-198,-166)" d="M398 637 L530 641 L528 661 L395 661 Q394 648 398 637z" fill="url(#gCream)"/><polygon points="200,471 332,475 332,477 199,473" fill="#EFE9DA" /><polygon points="313,445 348,433 335,478 313,480" fill="#F2F1EE" /><path transform="translate(-198,-166)" d="M412 608 L512 611 L512 646 L411 643 Q409 626 412 608z" fill="url(#gWhite)"/><polygon points="213,476 314,479 314,481 213,478" fill="#9d978a" /><path transform="translate(-198,-166)" d="M401 580 L537 585 L536 611 L400 607 Q399 594 401 580z" fill="url(#gCream2)"/><polygon points="202,417 204,417 204,440 202,440" fill="#C8402E" /><polygon points="202,440 338,443 338,445 202,442" fill="#8f8774" /><polygon points="326,375 342,377 346,420 326,419" fill="#F0EEEA" /><path transform="translate(-198,-166)" d="M401 556 L526 559 L526 582 L401 579 Q399 568 401 556z" fill="#2E3A4A"/><path transform="translate(-198,-166)" d="M403 556.5 L526 559.5 L525.5 580 L403 577 Q401 567 403 556.5z" fill="url(#gWhite)"/><path transform="translate(-198,-166)" d="M401 536 L527 540 L526 561 L401 557 Q399 546 401 536z" fill="url(#gWhite2)"/><polygon points="205,369 329,372 329,375 205,372" fill="#C77A5A" /><path transform="translate(-198,-166)" d="M401 556.5 L525 559.5 L525 560.8 L401 557.8z" fill="#56606c"/><path transform="translate(-198,-166)" d="M411 505 L536 507 L535 541 L410 538 Q408 521 411 505z" fill="url(#gWhite)"/><polygon points="213,338 338,340 338,342 213,340" fill="#35352f" /><polygon points="212,371 337,374 337,376 212,373" fill="#6f6a60" /><polygon points="214,312 219,303 219,339 215,336" fill="#F1EFEA" /><polygon points="219,303 338,305 338,341 219,339" fill="url(#gTan)" /><polygon points="219,337 338,339 338,341 219,339" fill="#5f5a4f" /><polygon points="329,268 342,263 344,304 330,308" fill="#F4EEE6" /><path transform="translate(-198,-166)" d="M395 432 L527 434 L528 474 L394 467 Q392 450 395 432z" fill="url(#gCream)"/><polygon points="196,299 330,306 330,308 196,301" fill="#a0978a" /><polygon points="199,262 206,254 206,266" fill="#EEEDEA" /><polygon points="326,255 342,252 339,268 326,272" fill="#F1F0ED" /><path transform="translate(-198,-166)" d="M405 418 L526 421 L524 438 L404 436 Q402 427 405 418z" fill="url(#gWhite2)"/><polygon points="210,250 328,253 328,255 208,252" fill="#B8705A" /><path transform="translate(-198,-166)" d="M417 383 L540 385 L541 418 L416 417 Q413 400 417 383z" fill="url(#gWhite)"/><polygon points="339,239 343,238 345,254 339,253" fill="#EEEDEA" /><polygon points="221,210 344,212 343,219 219,217" fill="#2A3031" /><polygon points="218,249 343,251 343,253 218,252" fill="#40464c" /></g><g transform="translate(-82.1,66.0) scale(0.882,0.867)"><polygon points="329,456 348,447 348,495 329,495" fill="url(#gBlue)" /><path transform="translate(-198,-166)" d="M398 637 L530 641 L528 661 L395 661 Q394 648 398 637z" fill="url(#gCream)"/><polygon points="200,471 332,475 332,477 199,473" fill="#EFE9DA" /><polygon points="313,445 348,433 335,478 313,480" fill="#F2F1EE" /><path transform="translate(-198,-166)" d="M412 608 L512 611 L512 646 L411 643 Q409 626 412 608z" fill="url(#gWhite)"/><polygon points="213,476 314,479 314,481 213,478" fill="#9d978a" /><path transform="translate(-198,-166)" d="M401 580 L537 585 L536 611 L400 607 Q399 594 401 580z" fill="url(#gCream2)"/><polygon points="202,417 204,417 204,440 202,440" fill="#C8402E" /><polygon points="202,440 338,443 338,445 202,442" fill="#8f8774" /><polygon points="326,375 342,377 346,420 326,419" fill="#F0EEEA" /><path transform="translate(-198,-166)" d="M401 556 L526 559 L526 582 L401 579 Q399 568 401 556z" fill="#2E3A4A"/><path transform="translate(-198,-166)" d="M403 556.5 L526 559.5 L525.5 580 L403 577 Q401 567 403 556.5z" fill="url(#gWhite)"/><path transform="translate(-198,-166)" d="M401 536 L527 540 L526 561 L401 557 Q399 546 401 536z" fill="url(#gWhite2)"/><polygon points="205,369 329,372 329,375 205,372" fill="#C77A5A" /><path transform="translate(-198,-166)" d="M401 556.5 L525 559.5 L525 560.8 L401 557.8z" fill="#56606c"/><path transform="translate(-198,-166)" d="M411 505 L536 507 L535 541 L410 538 Q408 521 411 505z" fill="url(#gWhite)"/><polygon points="213,338 338,340 338,342 213,340" fill="#35352f" /><polygon points="212,371 337,374 337,376 212,373" fill="#6f6a60" /><polygon points="214,312 219,303 219,339 215,336" fill="#F1EFEA" /><polygon points="219,303 338,305 338,341 219,339" fill="url(#gTan)" /><polygon points="219,337 338,339 338,341 219,339" fill="#5f5a4f" /><polygon points="329,268 342,263 344,304 330,308" fill="#F4EEE6" /><path transform="translate(-198,-166)" d="M395 432 L527 434 L528 474 L394 467 Q392 450 395 432z" fill="url(#gCream)"/><polygon points="196,299 330,306 330,308 196,301" fill="#a0978a" /><polygon points="199,262 206,254 206,266" fill="#EEEDEA" /><polygon points="326,255 342,252 339,268 326,272" fill="#F1F0ED" /><path transform="translate(-198,-166)" d="M405 418 L526 421 L524 438 L404 436 Q402 427 405 418z" fill="url(#gWhite2)"/><polygon points="210,250 328,253 328,255 208,252" fill="#B8705A" /><path transform="translate(-198,-166)" d="M417 383 L540 385 L541 418 L416 417 Q413 400 417 383z" fill="url(#gWhite)"/><polygon points="339,239 343,238 345,254 339,253" fill="#EEEDEA" /><polygon points="221,210 344,212 343,219 219,217" fill="#2A3031" /><polygon points="218,249 343,251 343,253 218,252" fill="#40464c" /></g><g transform="translate(595.7,-246.6) scale(0.817,1.498)"><polygon points="329,456 348,447 348,495 329,495" fill="url(#gBlue)" /><path transform="translate(-198,-166)" d="M398 637 L530 641 L528 661 L395 661 Q394 648 398 637z" fill="url(#gCream)"/><polygon points="200,471 332,475 332,477 199,473" fill="#EFE9DA" /><polygon points="313,445 348,433 335,478 313,480" fill="#F2F1EE" /><path transform="translate(-198,-166)" d="M412 608 L512 611 L512 646 L411 643 Q409 626 412 608z" fill="url(#gWhite)"/><polygon points="213,476 314,479 314,481 213,478" fill="#9d978a" /><path transform="translate(-198,-166)" d="M401 580 L537 585 L536 611 L400 607 Q399 594 401 580z" fill="url(#gCream2)"/><polygon points="202,417 204,417 204,440 202,440" fill="#C8402E" /><polygon points="202,440 338,443 338,445 202,442" fill="#8f8774" /><polygon points="326,375 342,377 346,420 326,419" fill="#F0EEEA" /><path transform="translate(-198,-166)" d="M401 556 L526 559 L526 582 L401 579 Q399 568 401 556z" fill="#2E3A4A"/><path transform="translate(-198,-166)" d="M403 556.5 L526 559.5 L525.5 580 L403 577 Q401 567 403 556.5z" fill="url(#gWhite)"/><path transform="translate(-198,-166)" d="M401 536 L527 540 L526 561 L401 557 Q399 546 401 536z" fill="url(#gWhite2)"/><polygon points="205,369 329,372 329,375 205,372" fill="#C77A5A" /><path transform="translate(-198,-166)" d="M401 556.5 L525 559.5 L525 560.8 L401 557.8z" fill="#56606c"/><path transform="translate(-198,-166)" d="M411 505 L536 507 L535 541 L410 538 Q408 521 411 505z" fill="url(#gWhite)"/><polygon points="213,338 338,340 338,342 213,340" fill="#35352f" /><polygon points="212,371 337,374 337,376 212,373" fill="#6f6a60" /><polygon points="214,312 219,303 219,339 215,336" fill="#F1EFEA" /><polygon points="219,303 338,305 338,341 219,339" fill="url(#gTan)" /><polygon points="219,337 338,339 338,341 219,339" fill="#5f5a4f" /><polygon points="329,268 342,263 344,304 330,308" fill="#F4EEE6" /><path transform="translate(-198,-166)" d="M395 432 L527 434 L528 474 L394 467 Q392 450 395 432z" fill="url(#gCream)"/><polygon points="196,299 330,306 330,308 196,301" fill="#a0978a" /><polygon points="199,262 206,254 206,266" fill="#EEEDEA" /><polygon points="326,255 342,252 339,268 326,272" fill="#F1F0ED" /><path transform="translate(-198,-166)" d="M405 418 L526 421 L524 438 L404 436 Q402 427 405 418z" fill="url(#gWhite2)"/><polygon points="210,250 328,253 328,255 208,252" fill="#B8705A" /><path transform="translate(-198,-166)" d="M417 383 L540 385 L541 418 L416 417 Q413 400 417 383z" fill="url(#gWhite)"/><polygon points="339,239 343,238 345,254 339,253" fill="#EEEDEA" /><polygon points="221,210 344,212 343,219 219,217" fill="#2A3031" /><polygon points="218,249 343,251 343,253 218,252" fill="#40464c" /></g><g transform="translate(455.2,104.2) scale(0.948,0.789)"><polygon points="329,456 348,447 348,495 329,495" fill="url(#gBlue)" /><path transform="translate(-198,-166)" d="M398 637 L530 641 L528 661 L395 661 Q394 648 398 637z" fill="url(#gCream)"/><polygon points="200,471 332,475 332,477 199,473" fill="#EFE9DA" /><polygon points="313,445 348,433 335,478 313,480" fill="#F2F1EE" /><path transform="translate(-198,-166)" d="M412 608 L512 611 L512 646 L411 643 Q409 626 412 608z" fill="url(#gWhite)"/><polygon points="213,476 314,479 314,481 213,478" fill="#9d978a" /><path transform="translate(-198,-166)" d="M401 580 L537 585 L536 611 L400 607 Q399 594 401 580z" fill="url(#gCream2)"/><polygon points="202,417 204,417 204,440 202,440" fill="#C8402E" /><polygon points="202,440 338,443 338,445 202,442" fill="#8f8774" /><polygon points="326,375 342,377 346,420 326,419" fill="#F0EEEA" /><path transform="translate(-198,-166)" d="M401 556 L526 559 L526 582 L401 579 Q399 568 401 556z" fill="#2E3A4A"/><path transform="translate(-198,-166)" d="M403 556.5 L526 559.5 L525.5 580 L403 577 Q401 567 403 556.5z" fill="url(#gWhite)"/><path transform="translate(-198,-166)" d="M401 536 L527 540 L526 561 L401 557 Q399 546 401 536z" fill="url(#gWhite2)"/><polygon points="205,369 329,372 329,375 205,372" fill="#C77A5A" /><path transform="translate(-198,-166)" d="M401 556.5 L525 559.5 L525 560.8 L401 557.8z" fill="#56606c"/><path transform="translate(-198,-166)" d="M411 505 L536 507 L535 541 L410 538 Q408 521 411 505z" fill="url(#gWhite)"/><polygon points="213,338 338,340 338,342 213,340" fill="#35352f" /><polygon points="212,371 337,374 337,376 212,373" fill="#6f6a60" /><polygon points="214,312 219,303 219,339 215,336" fill="#F1EFEA" /><polygon points="219,303 338,305 338,341 219,339" fill="url(#gTan)" /><polygon points="219,337 338,339 338,341 219,339" fill="#5f5a4f" /><polygon points="329,268 342,263 344,304 330,308" fill="#F4EEE6" /><path transform="translate(-198,-166)" d="M395 432 L527 434 L528 474 L394 467 Q392 450 395 432z" fill="url(#gCream)"/><polygon points="196,299 330,306 330,308 196,301" fill="#a0978a" /><polygon points="199,262 206,254 206,266" fill="#EEEDEA" /><polygon points="326,255 342,252 339,268 326,272" fill="#F1F0ED" /><path transform="translate(-198,-166)" d="M405 418 L526 421 L524 438 L404 436 Q402 427 405 418z" fill="url(#gWhite2)"/><polygon points="210,250 328,253 328,255 208,252" fill="#B8705A" /><path transform="translate(-198,-166)" d="M417 383 L540 385 L541 418 L416 417 Q413 400 417 383z" fill="url(#gWhite)"/><polygon points="339,239 343,238 345,254 339,253" fill="#EEEDEA" /><polygon points="221,210 344,212 343,219 219,217" fill="#2A3031" /><polygon points="218,249 343,251 343,253 218,252" fill="#40464c" /></g></svg></div></div><div class="a" style="left:27px;top:250px;width:82px;height:47px;background:#fff;border:1px solid #CFCFCF"></div><div class="a" style="left:29px;top:252px;width:78px;height:44px;overflow:hidden"><div class="a" style="left:0;top:0;width:880px;height:495px;transform:scale(0.08864);transform-origin:0 0"><div class="a" style="left:0;top:0;width:880px;height:495px;background:linear-gradient(#252525 0%,#222 35%,#151515 75%,#0f0f0f 100%)"></div><div class="t" style="left:248px;top:32.80px;font-family:'Liberation Serif';font-size:44px;line-height:44px;color:#fff;font-weight:bold;font-style:italic;transform:scaleY(1.12);transform-origin:0 85%;-webkit-text-stroke-width:7px;letter-spacing:0.2px;letter-spacing:0;transform:scaleX(0.92) scaleY(1.1)">General Layout Page</div><div class="t" style="left:240px;top:108px;width:400px;text-align:center;font-size:17px;line-height:17px;color:#159DD6">This is a placeholder for your text. This is here to</div><div class="t" style="left:240px;top:132px;width:400px;text-align:center;font-size:17px;line-height:17px;color:#159DD6">give you an idea of what the text may look like in</div><div class="t" style="left:240px;top:156px;width:400px;text-align:center;font-size:17px;line-height:17px;color:#159DD6">an area that is dedicated to text. Putting your text</div><div class="t" style="left:240px;top:180px;width:400px;text-align:center;font-size:17px;line-height:17px;color:#159DD6">here may look similar. However it may not look</div><div class="t" style="left:240px;top:204px;width:400px;text-align:center;font-size:17px;line-height:17px;color:#159DD6">exact to this example. Your text here.</div><div class="t" style="left:240px;top:252px;width:400px;text-align:center;font-size:17px;line-height:17px;color:#159DD6">This is a placeholder for your text. This is here to</div><div class="t" style="left:240px;top:276px;width:400px;text-align:center;font-size:17px;line-height:17px;color:#159DD6">give you an idea of what the text may look like</div><div class="t" style="left:240px;top:300px;width:400px;text-align:center;font-size:17px;line-height:17px;color:#159DD6">in an area that is dedicated to text.</div><svg class="a" style="left:0;top:0" width="880" height="495"><g transform="translate(-140.2,-180.6) scale(0.719,1.365)"><polygon points="329,456 348,447 348,495 329,495" fill="url(#gBlue)" /><path transform="translate(-198,-166)" d="M398 637 L530 641 L528 661 L395 661 Q394 648 398 637z" fill="url(#gCream)"/><polygon points="200,471 332,475 332,477 199,473" fill="#EFE9DA" /><polygon points="313,445 348,433 335,478 313,480" fill="#F2F1EE" /><path transform="translate(-198,-166)" d="M412 608 L512 611 L512 646 L411 643 Q409 626 412 608z" fill="url(#gWhite)"/><polygon points="213,476 314,479 314,481 213,478" fill="#9d978a" /><path transform="translate(-198,-166)" d="M401 580 L537 585 L536 611 L400 607 Q399 594 401 580z" fill="url(#gCream2)"/><polygon points="202,417 204,417 204,440 202,440" fill="#C8402E" /><polygon points="202,440 338,443 338,445 202,442" fill="#8f8774" /><polygon points="326,375 342,377 346,420 326,419" fill="#F0EEEA" /><path transform="translate(-198,-166)" d="M401 556 L526 559 L526 582 L401 579 Q399 568 401 556z" fill="#2E3A4A"/><path transform="translate(-198,-166)" d="M403 556.5 L526 559.5 L525.5 580 L403 577 Q401 567 403 556.5z" fill="url(#gWhite)"/><path transform="translate(-198,-166)" d="M401 536 L527 540 L526 561 L401 557 Q399 546 401 536z" fill="url(#gWhite2)"/><polygon points="205,369 329,372 329,375 205,372" fill="#C77A5A" /><path transform="translate(-198,-166)" d="M401 556.5 L525 559.5 L525 560.8 L401 557.8z" fill="#56606c"/><path transform="translate(-198,-166)" d="M411 505 L536 507 L535 541 L410 538 Q408 521 411 505z" fill="url(#gWhite)"/><polygon points="213,338 338,340 338,342 213,340" fill="#35352f" /><polygon points="212,371 337,374 337,376 212,373" fill="#6f6a60" /><polygon points="214,312 219,303 219,339 215,336" fill="#F1EFEA" /><polygon points="219,303 338,305 338,341 219,339" fill="url(#gTan)" /><polygon points="219,337 338,339 338,341 219,339" fill="#5f5a4f" /><polygon points="329,268 342,263 344,304 330,308" fill="#F4EEE6" /><path transform="translate(-198,-166)" d="M395 432 L527 434 L528 474 L394 467 Q392 450 395 432z" fill="url(#gCream)"/><polygon points="196,299 330,306 330,308 196,301" fill="#a0978a" /><polygon points="199,262 206,254 206,266" fill="#EEEDEA" /><polygon points="326,255 342,252 339,268 326,272" fill="#F1F0ED" /><path transform="translate(-198,-166)" d="M405 418 L526 421 L524 438 L404 436 Q402 427 405 418z" fill="url(#gWhite2)"/><polygon points="210,250 328,253 328,255 208,252" fill="#B8705A" /><path transform="translate(-198,-166)" d="M417 383 L540 385 L541 418 L416 417 Q413 400 417 383z" fill="url(#gWhite)"/><polygon points="339,239 343,238 345,254 339,253" fill="#EEEDEA" /><polygon points="221,210 344,212 343,219 219,217" fill="#2A3031" /><polygon points="218,249 343,251 343,253 218,252" fill="#40464c" /></g><g transform="translate(-82.1,66.0) scale(0.882,0.867)"><polygon points="329,456 348,447 348,495 329,495" fill="url(#gBlue)" /><path transform="translate(-198,-166)" d="M398 637 L530 641 L528 661 L395 661 Q394 648 398 637z" fill="url(#gCream)"/><polygon points="200,471 332,475 332,477 199,473" fill="#EFE9DA" /><polygon points="313,445 348,433 335,478 313,480" fill="#F2F1EE" /><path transform="translate(-198,-166)" d="M412 608 L512 611 L512 646 L411 643 Q409 626 412 608z" fill="url(#gWhite)"/><polygon points="213,476 314,479 314,481 213,478" fill="#9d978a" /><path transform="translate(-198,-166)" d="M401 580 L537 585 L536 611 L400 607 Q399 594 401 580z" fill="url(#gCream2)"/><polygon points="202,417 204,417 204,440 202,440" fill="#C8402E" /><polygon points="202,440 338,443 338,445 202,442" fill="#8f8774" /><polygon points="326,375 342,377 346,420 326,419" fill="#F0EEEA" /><path transform="translate(-198,-166)" d="M401 556 L526 559 L526 582 L401 579 Q399 568 401 556z" fill="#2E3A4A"/><path transform="translate(-198,-166)" d="M403 556.5 L526 559.5 L525.5 580 L403 577 Q401 567 403 556.5z" fill="url(#gWhite)"/><path transform="translate(-198,-166)" d="M401 536 L527 540 L526 561 L401 557 Q399 546 401 536z" fill="url(#gWhite2)"/><polygon points="205,369 329,372 329,375 205,372" fill="#C77A5A" /><path transform="translate(-198,-166)" d="M401 556.5 L525 559.5 L525 560.8 L401 557.8z" fill="#56606c"/><path transform="translate(-198,-166)" d="M411 505 L536 507 L535 541 L410 538 Q408 521 411 505z" fill="url(#gWhite)"/><polygon points="213,338 338,340 338,342 213,340" fill="#35352f" /><polygon points="212,371 337,374 337,376 212,373" fill="#6f6a60" /><polygon points="214,312 219,303 219,339 215,336" fill="#F1EFEA" /><polygon points="219,303 338,305 338,341 219,339" fill="url(#gTan)" /><polygon points="219,337 338,339 338,341 219,339" fill="#5f5a4f" /><polygon points="329,268 342,263 344,304 330,308" fill="#F4EEE6" /><path transform="translate(-198,-166)" d="M395 432 L527 434 L528 474 L394 467 Q392 450 395 432z" fill="url(#gCream)"/><polygon points="196,299 330,306 330,308 196,301" fill="#a0978a" /><polygon points="199,262 206,254 206,266" fill="#EEEDEA" /><polygon points="326,255 342,252 339,268 326,272" fill="#F1F0ED" /><path transform="translate(-198,-166)" d="M405 418 L526 421 L524 438 L404 436 Q402 427 405 418z" fill="url(#gWhite2)"/><polygon points="210,250 328,253 328,255 208,252" fill="#B8705A" /><path transform="translate(-198,-166)" d="M417 383 L540 385 L541 418 L416 417 Q413 400 417 383z" fill="url(#gWhite)"/><polygon points="339,239 343,238 345,254 339,253" fill="#EEEDEA" /><polygon points="221,210 344,212 343,219 219,217" fill="#2A3031" /><polygon points="218,249 343,251 343,253 218,252" fill="#40464c" /></g><g transform="translate(595.7,-246.6) scale(0.817,1.498)"><polygon points="329,456 348,447 348,495 329,495" fill="url(#gBlue)" /><path transform="translate(-198,-166)" d="M398 637 L530 641 L528 661 L395 661 Q394 648 398 637z" fill="url(#gCream)"/><polygon points="200,471 332,475 332,477 199,473" fill="#EFE9DA" /><polygon points="313,445 348,433 335,478 313,480" fill="#F2F1EE" /><path transform="translate(-198,-166)" d="M412 608 L512 611 L512 646 L411 643 Q409 626 412 608z" fill="url(#gWhite)"/><polygon points="213,476 314,479 314,481 213,478" fill="#9d978a" /><path transform="translate(-198,-166)" d="M401 580 L537 585 L536 611 L400 607 Q399 594 401 580z" fill="url(#gCream2)"/><polygon points="202,417 204,417 204,440 202,440" fill="#C8402E" /><polygon points="202,440 338,443 338,445 202,442" fill="#8f8774" /><polygon points="326,375 342,377 346,420 326,419" fill="#F0EEEA" /><path transform="translate(-198,-166)" d="M401 556 L526 559 L526 582 L401 579 Q399 568 401 556z" fill="#2E3A4A"/><path transform="translate(-198,-166)" d="M403 556.5 L526 559.5 L525.5 580 L403 577 Q401 567 403 556.5z" fill="url(#gWhite)"/><path transform="translate(-198,-166)" d="M401 536 L527 540 L526 561 L401 557 Q399 546 401 536z" fill="url(#gWhite2)"/><polygon points="205,369 329,372 329,375 205,372" fill="#C77A5A" /><path transform="translate(-198,-166)" d="M401 556.5 L525 559.5 L525 560.8 L401 557.8z" fill="#56606c"/><path transform="translate(-198,-166)" d="M411 505 L536 507 L535 541 L410 538 Q408 521 411 505z" fill="url(#gWhite)"/><polygon points="213,338 338,340 338,342 213,340" fill="#35352f" /><polygon points="212,371 337,374 337,376 212,373" fill="#6f6a60" /><polygon points="214,312 219,303 219,339 215,336" fill="#F1EFEA" /><polygon points="219,303 338,305 338,341 219,339" fill="url(#gTan)" /><polygon points="219,337 338,339 338,341 219,339" fill="#5f5a4f" /><polygon points="329,268 342,263 344,304 330,308" fill="#F4EEE6" /><path transform="translate(-198,-166)" d="M395 432 L527 434 L528 474 L394 467 Q392 450 395 432z" fill="url(#gCream)"/><polygon points="196,299 330,306 330,308 196,301" fill="#a0978a" /><polygon points="199,262 206,254 206,266" fill="#EEEDEA" /><polygon points="326,255 342,252 339,268 326,272" fill="#F1F0ED" /><path transform="translate(-198,-166)" d="M405 418 L526 421 L524 438 L404 436 Q402 427 405 418z" fill="url(#gWhite2)"/><polygon points="210,250 328,253 328,255 208,252" fill="#B8705A" /><path transform="translate(-198,-166)" d="M417 383 L540 385 L541 418 L416 417 Q413 400 417 383z" fill="url(#gWhite)"/><polygon points="339,239 343,238 345,254 339,253" fill="#EEEDEA" /><polygon points="221,210 344,212 343,219 219,217" fill="#2A3031" /><polygon points="218,249 343,251 343,253 218,252" fill="#40464c" /></g><g transform="translate(455.2,104.2) scale(0.948,0.789)"><polygon points="329,456 348,447 348,495 329,495" fill="url(#gBlue)" /><path transform="translate(-198,-166)" d="M398 637 L530 641 L528 661 L395 661 Q394 648 398 637z" fill="url(#gCream)"/><polygon points="200,471 332,475 332,477 199,473" fill="#EFE9DA" /><polygon points="313,445 348,433 335,478 313,480" fill="#F2F1EE" /><path transform="translate(-198,-166)" d="M412 608 L512 611 L512 646 L411 643 Q409 626 412 608z" fill="url(#gWhite)"/><polygon points="213,476 314,479 314,481 213,478" fill="#9d978a" /><path transform="translate(-198,-166)" d="M401 580 L537 585 L536 611 L400 607 Q399 594 401 580z" fill="url(#gCream2)"/><polygon points="202,417 204,417 204,440 202,440" fill="#C8402E" /><polygon points="202,440 338,443 338,445 202,442" fill="#8f8774" /><polygon points="326,375 342,377 346,420 326,419" fill="#F0EEEA" /><path transform="translate(-198,-166)" d="M401 556 L526 559 L526 582 L401 579 Q399 568 401 556z" fill="#2E3A4A"/><path transform="translate(-198,-166)" d="M403 556.5 L526 559.5 L525.5 580 L403 577 Q401 567 403 556.5z" fill="url(#gWhite)"/><path transform="translate(-198,-166)" d="M401 536 L527 540 L526 561 L401 557 Q399 546 401 536z" fill="url(#gWhite2)"/><polygon points="205,369 329,372 329,375 205,372" fill="#C77A5A" /><path transform="translate(-198,-166)" d="M401 556.5 L525 559.5 L525 560.8 L401 557.8z" fill="#56606c"/><path transform="translate(-198,-166)" d="M411 505 L536 507 L535 541 L410 538 Q408 521 411 505z" fill="url(#gWhite)"/><polygon points="213,338 338,340 338,342 213,340" fill="#35352f" /><polygon points="212,371 337,374 337,376 212,373" fill="#6f6a60" /><polygon points="214,312 219,303 219,339 215,336" fill="#F1EFEA" /><polygon points="219,303 338,305 338,341 219,339" fill="url(#gTan)" /><polygon points="219,337 338,339 338,341 219,339" fill="#5f5a4f" /><polygon points="329,268 342,263 344,304 330,308" fill="#F4EEE6" /><path transform="translate(-198,-166)" d="M395 432 L527 434 L528 474 L394 467 Q392 450 395 432z" fill="url(#gCream)"/><polygon points="196,299 330,306 330,308 196,301" fill="#a0978a" /><polygon points="199,262 206,254 206,266" fill="#EEEDEA" /><polygon points="326,255 342,252 339,268 326,272" fill="#F1F0ED" /><path transform="translate(-198,-166)" d="M405 418 L526 421 L524 438 L404 436 Q402 427 405 418z" fill="url(#gWhite2)"/><polygon points="210,250 328,253 328,255 208,252" fill="#B8705A" /><path transform="translate(-198,-166)" d="M417 383 L540 385 L541 418 L416 417 Q413 400 417 383z" fill="url(#gWhite)"/><polygon points="339,239 343,238 345,254 339,253" fill="#EEEDEA" /><polygon points="221,210 344,212 343,219 219,217" fill="#2A3031" /><polygon points="218,249 343,251 343,253 218,252" fill="#40464c" /></g></svg></div></div><div class="a" style="left:27px;top:316px;width:82px;height:47px;background:#fff;border:1px solid #CFCFCF"></div><div class="a" style="left:29px;top:318px;width:78px;height:44px;overflow:hidden"><div class="a" style="left:0;top:0;width:880px;height:495px;transform:scale(0.08864);transform-origin:0 0"><div class="a" style="left:0;top:0;width:880px;height:495px;background:linear-gradient(#d9d9d9 0%,#f4f4f4 40%,#fff 60%,#fff 100%)"></div><div class="t" style="left:332px;top:10.18px;font-family:'Liberation Serif';font-size:20px;line-height:20px;color:#111;font-weight:bold;font-style:italic;transform:scaleY(1.12);transform-origin:0 85%;-webkit-text-stroke-width:7px;letter-spacing:0.2px;letter-spacing:0">-2 Column Layout Page-</div><div class="t" style="left:22px;top:39.49px;font-family:'Liberation Serif';font-size:32px;line-height:32px;color:#111;font-weight:bold;font-style:italic;transform:scaleY(1.12);transform-origin:0 85%;-webkit-text-stroke-width:7px;letter-spacing:0.2px">Reading <span style="color:#159BD6">Paragraph 1</span></div><div class="t" style="left:553px;top:39.49px;font-family:'Liberation Serif';font-size:32px;line-height:32px;color:#111;font-weight:bold;font-style:italic;transform:scaleY(1.12);transform-origin:0 85%;-webkit-text-stroke-width:7px;letter-spacing:0.2px">Reading <span style="color:#159BD6">Paragraph 2</span></div><svg class="a" style="left:0;top:0" width="880" height="495"><polygon points="60.00,80.00 62.47,86.60 69.51,86.91 63.99,91.30 65.88,98.09 60.00,94.20 54.12,98.09 56.01,91.30 50.49,86.91 57.53,86.60" fill="#111"/><polygon points="140.00,80.00 142.47,86.60 149.51,86.91 143.99,91.30 145.88,98.09 140.00,94.20 134.12,98.09 136.01,91.30 130.49,86.91 137.53,86.60" fill="#111"/><polygon points="220.00,80.00 222.47,86.60 229.51,86.91 223.99,91.30 225.88,98.09 220.00,94.20 214.12,98.09 216.01,91.30 210.49,86.91 217.53,86.60" fill="#111"/><polygon points="300.00,80.00 302.47,86.60 309.51,86.91 303.99,91.30 305.88,98.09 300.00,94.20 294.12,98.09 296.01,91.30 290.49,86.91 297.53,86.60" fill="#111"/><polygon points="600.00,80.00 602.47,86.60 609.51,86.91 603.99,91.30 605.88,98.09 600.00,94.20 594.12,98.09 596.01,91.30 590.49,86.91 597.53,86.60" fill="#111"/><polygon points="680.00,80.00 682.47,86.60 689.51,86.91 683.99,91.30 685.88,98.09 680.00,94.20 674.12,98.09 676.01,91.30 670.49,86.91 677.53,86.60" fill="#111"/><polygon points="760.00,80.00 762.47,86.60 769.51,86.91 763.99,91.30 765.88,98.09 760.00,94.20 754.12,98.09 756.01,91.30 750.49,86.91 757.53,86.60" fill="#111"/><polygon points="840.00,80.00 842.47,86.60 849.51,86.91 843.99,91.30 845.88,98.09 840.00,94.20 834.12,98.09 836.01,91.30 830.49,86.91 837.53,86.60" fill="#111"/></svg><div class="t" style="left:32px;top:118.0px;font-size:21px;line-height:21px;color:#159DD6">This is a placeholder for your</div><div class="t" style="left:32px;top:144.5px;font-size:21px;line-height:21px;color:#159DD6">text. This is here to give you</div><div class="t" style="left:32px;top:171.0px;font-size:21px;line-height:21px;color:#159DD6">an idea of what the text may</div><div class="t" style="left:32px;top:197.5px;font-size:21px;line-height:21px;color:#159DD6">look like in an area that is</div><div class="t" style="left:32px;top:224.0px;font-size:21px;line-height:21px;color:#159DD6">dedicated to text.</div><div class="t" style="left:32px;top:277.0px;font-size:21px;line-height:21px;color:#159DD6">This is a placeholder for your</div><div class="t" style="left:32px;top:303.5px;font-size:21px;line-height:21px;color:#159DD6">text. This is here to give you</div><div class="t" style="left:32px;top:330.0px;font-size:21px;line-height:21px;color:#159DD6">an idea of what the text may</div><div class="t" style="left:32px;top:356.5px;font-size:21px;line-height:21px;color:#159DD6">look like in an area that is</div><div class="t" style="left:32px;top:383.0px;font-size:21px;line-height:21px;color:#159DD6">dedicated to text. Putting your</div><div class="t" style="left:32px;top:409.5px;font-size:21px;line-height:21px;color:#159DD6">text here may look similar.</div><div class="t" style="left:32px;top:436.0px;font-size:21px;line-height:21px;color:#159DD6">However it may not look exact.</div><div class="t" style="left:582px;top:118.0px;font-size:21px;line-height:21px;color:#159DD6">This is a placeholder for your</div><div class="t" style="left:582px;top:144.5px;font-size:21px;line-height:21px;color:#159DD6">text. This is here to give you</div><div class="t" style="left:582px;top:171.0px;font-size:21px;line-height:21px;color:#159DD6">an idea of what the text may</div><div class="t" style="left:582px;top:197.5px;font-size:21px;line-height:21px;color:#159DD6">look like in an area that is</div><div class="t" style="left:582px;top:224.0px;font-size:21px;line-height:21px;color:#159DD6">dedicated to text.</div><div class="t" style="left:582px;top:277.0px;font-size:21px;line-height:21px;color:#159DD6">This is a placeholder for your</div><div class="t" style="left:582px;top:303.5px;font-size:21px;line-height:21px;color:#159DD6">text. This is here to give you</div><div class="t" style="left:582px;top:330.0px;font-size:21px;line-height:21px;color:#159DD6">an idea of what the text may</div><div class="t" style="left:582px;top:356.5px;font-size:21px;line-height:21px;color:#159DD6">look like in an area that is</div><div class="t" style="left:582px;top:383.0px;font-size:21px;line-height:21px;color:#159DD6">dedicated to text. Putting your</div><div class="t" style="left:582px;top:409.5px;font-size:21px;line-height:21px;color:#159DD6">text here may look similar.</div><div class="t" style="left:582px;top:436.0px;font-size:21px;line-height:21px;color:#159DD6">However it may not look exact.</div><svg class="a" style="left:0;top:0" width="880" height="495"><g transform="translate(73.3,-163.3) scale(1.327,1.330)"><polygon points="329,456 348,447 348,495 329,495" fill="url(#gBlue)" /><path transform="translate(-198,-166)" d="M398 637 L530 641 L528 661 L395 661 Q394 648 398 637z" fill="url(#gCream)"/><polygon points="200,471 332,475 332,477 199,473" fill="#EFE9DA" /><polygon points="313,445 348,433 335,478 313,480" fill="#F2F1EE" /><path transform="translate(-198,-166)" d="M412 608 L512 611 L512 646 L411 643 Q409 626 412 608z" fill="url(#gWhite)"/><polygon points="213,476 314,479 314,481 213,478" fill="#9d978a" /><path transform="translate(-198,-166)" d="M401 580 L537 585 L536 611 L400 607 Q399 594 401 580z" fill="url(#gCream2)"/><polygon points="202,417 204,417 204,440 202,440" fill="#C8402E" /><polygon points="202,440 338,443 338,445 202,442" fill="#8f8774" /><polygon points="326,375 342,377 346,420 326,419" fill="#F0EEEA" /><path transform="translate(-198,-166)" d="M401 556 L526 559 L526 582 L401 579 Q399 568 401 556z" fill="#2E3A4A"/><path transform="translate(-198,-166)" d="M403 556.5 L526 559.5 L525.5 580 L403 577 Q401 567 403 556.5z" fill="url(#gWhite)"/><path transform="translate(-198,-166)" d="M401 536 L527 540 L526 561 L401 557 Q399 546 401 536z" fill="url(#gWhite2)"/><polygon points="205,369 329,372 329,375 205,372" fill="#C77A5A" /><path transform="translate(-198,-166)" d="M401 556.5 L525 559.5 L525 560.8 L401 557.8z" fill="#56606c"/><path transform="translate(-198,-166)" d="M411 505 L536 507 L535 541 L410 538 Q408 521 411 505z" fill="url(#gWhite)"/><polygon points="213,338 338,340 338,342 213,340" fill="#35352f" /><polygon points="212,371 337,374 337,376 212,373" fill="#6f6a60" /><polygon points="214,312 219,303 219,339 215,336" fill="#F1EFEA" /><polygon points="219,303 338,305 338,341 219,339" fill="url(#gTan)" /><polygon points="219,337 338,339 338,341 219,339" fill="#5f5a4f" /><polygon points="329,268 342,263 344,304 330,308" fill="#F4EEE6" /><path transform="translate(-198,-166)" d="M395 432 L527 434 L528 474 L394 467 Q392 450 395 432z" fill="url(#gCream)"/><polygon points="196,299 330,306 330,308 196,301" fill="#a0978a" /><polygon points="199,262 206,254 206,266" fill="#EEEDEA" /><polygon points="326,255 342,252 339,268 326,272" fill="#F1F0ED" /><path transform="translate(-198,-166)" d="M405 418 L526 421 L524 438 L404 436 Q402 427 405 418z" fill="url(#gWhite2)"/><polygon points="210,250 328,253 328,255 208,252" fill="#B8705A" /><path transform="translate(-198,-166)" d="M417 383 L540 385 L541 418 L416 417 Q413 400 417 383z" fill="url(#gWhite)"/><polygon points="339,239 343,238 345,254 339,253" fill="#EEEDEA" /><polygon points="221,210 344,212 343,219 219,217" fill="#2A3031" /><polygon points="218,249 343,251 343,253 218,252" fill="#40464c" /></g></svg></div></div><div class="a" style="left:27px;top:382px;width:82px;height:47px;background:#fff;border:1px solid #CFCFCF"></div><div class="a" style="left:29px;top:384px;width:78px;height:44px;overflow:hidden"><div class="a" style="left:0;top:0;width:880px;height:495px;transform:scale(0.08864);transform-origin:0 0"><div class="a" style="left:0;top:0;width:880px;height:495px;background:linear-gradient(#252525 0%,#222 35%,#151515 75%,#0f0f0f 100%)"></div><div class="t" style="left:332px;top:10.18px;font-family:'Liberation Serif';font-size:20px;line-height:20px;color:#fff;font-weight:bold;font-style:italic;transform:scaleY(1.12);transform-origin:0 85%;-webkit-text-stroke-width:7px;letter-spacing:0.2px;letter-spacing:0">-2 Column Layout Page-</div><div class="t" style="left:22px;top:39.49px;font-family:'Liberation Serif';font-size:32px;line-height:32px;color:#fff;font-weight:bold;font-style:italic;transform:scaleY(1.12);transform-origin:0 85%;-webkit-text-stroke-width:7px;letter-spacing:0.2px">Reading <span style="color:#159BD6">Paragraph 1</span></div><div class="t" style="left:553px;top:39.49px;font-family:'Liberation Serif';font-size:32px;line-height:32px;color:#fff;font-weight:bold;font-style:italic;transform:scaleY(1.12);transform-origin:0 85%;-webkit-text-stroke-width:7px;letter-spacing:0.2px">Reading <span style="color:#159BD6">Paragraph 2</span></div><svg class="a" style="left:0;top:0" width="880" height="495"><polygon points="60.00,80.00 62.47,86.60 69.51,86.91 63.99,91.30 65.88,98.09 60.00,94.20 54.12,98.09 56.01,91.30 50.49,86.91 57.53,86.60" fill="#fff"/><polygon points="140.00,80.00 142.47,86.60 149.51,86.91 143.99,91.30 145.88,98.09 140.00,94.20 134.12,98.09 136.01,91.30 130.49,86.91 137.53,86.60" fill="#fff"/><polygon points="220.00,80.00 222.47,86.60 229.51,86.91 223.99,91.30 225.88,98.09 220.00,94.20 214.12,98.09 216.01,91.30 210.49,86.91 217.53,86.60" fill="#fff"/><polygon points="300.00,80.00 302.47,86.60 309.51,86.91 303.99,91.30 305.88,98.09 300.00,94.20 294.12,98.09 296.01,91.30 290.49,86.91 297.53,86.60" fill="#fff"/><polygon points="600.00,80.00 602.47,86.60 609.51,86.91 603.99,91.30 605.88,98.09 600.00,94.20 594.12,98.09 596.01,91.30 590.49,86.91 597.53,86.60" fill="#fff"/><polygon points="680.00,80.00 682.47,86.60 689.51,86.91 683.99,91.30 685.88,98.09 680.00,94.20 674.12,98.09 676.01,91.30 670.49,86.91 677.53,86.60" fill="#fff"/><polygon points="760.00,80.00 762.47,86.60 769.51,86.91 763.99,91.30 765.88,98.09 760.00,94.20 754.12,98.09 756.01,91.30 750.49,86.91 757.53,86.60" fill="#fff"/><polygon points="840.00,80.00 842.47,86.60 849.51,86.91 843.99,91.30 845.88,98.09 840.00,94.20 834.12,98.09 836.01,91.30 830.49,86.91 837.53,86.60" fill="#fff"/></svg><div class="t" style="left:32px;top:118.0px;font-size:21px;line-height:21px;color:#159DD6">This is a placeholder for your</div><div class="t" style="left:32px;top:144.5px;font-size:21px;line-height:21px;color:#159DD6">text. This is here to give you</div><div class="t" style="left:32px;top:171.0px;font-size:21px;line-height:21px;color:#159DD6">an idea of what the text may</div><div class="t" style="left:32px;top:197.5px;font-size:21px;line-height:21px;color:#159DD6">look like in an area that is</div><div class="t" style="left:32px;top:224.0px;font-size:21px;line-height:21px;color:#159DD6">dedicated to text.</div><div class="t" style="left:32px;top:277.0px;font-size:21px;line-height:21px;color:#159DD6">This is a placeholder for your</div><div class="t" style="left:32px;top:303.5px;font-size:21px;line-height:21px;color:#159DD6">text. This is here to give you</div><div class="t" style="left:32px;top:330.0px;font-size:21px;line-height:21px;color:#159DD6">an idea of what the text may</div><div class="t" style="left:32px;top:356.5px;font-size:21px;line-height:21px;color:#159DD6">look like in an area that is</div><div class="t" style="left:32px;top:383.0px;font-size:21px;line-height:21px;color:#159DD6">dedicated to text. Putting your</div><div class="t" style="left:32px;top:409.5px;font-size:21px;line-height:21px;color:#159DD6">text here may look similar.</div><div class="t" style="left:32px;top:436.0px;font-size:21px;line-height:21px;color:#159DD6">However it may not look exact.</div><div class="t" style="left:582px;top:118.0px;font-size:21px;line-height:21px;color:#159DD6">This is a placeholder for your</div><div class="t" style="left:582px;top:144.5px;font-size:21px;line-height:21px;color:#159DD6">text. This is here to give you</div><div class="t" style="left:582px;top:171.0px;font-size:21px;line-height:21px;color:#159DD6">an idea of what the text may</div><div class="t" style="left:582px;top:197.5px;font-size:21px;line-height:21px;color:#159DD6">look like in an area that is</div><div class="t" style="left:582px;top:224.0px;font-size:21px;line-height:21px;color:#159DD6">dedicated to text.</div><div class="t" style="left:582px;top:277.0px;font-size:21px;line-height:21px;color:#159DD6">This is a placeholder for your</div><div class="t" style="left:582px;top:303.5px;font-size:21px;line-height:21px;color:#159DD6">text. This is here to give you</div><div class="t" style="left:582px;top:330.0px;font-size:21px;line-height:21px;color:#159DD6">an idea of what the text may</div><div class="t" style="left:582px;top:356.5px;font-size:21px;line-height:21px;color:#159DD6">look like in an area that is</div><div class="t" style="left:582px;top:383.0px;font-size:21px;line-height:21px;color:#159DD6">dedicated to text. Putting your</div><div class="t" style="left:582px;top:409.5px;font-size:21px;line-height:21px;color:#159DD6">text here may look similar.</div><div class="t" style="left:582px;top:436.0px;font-size:21px;line-height:21px;color:#159DD6">However it may not look exact.</div><svg class="a" style="left:0;top:0" width="880" height="495"><g transform="translate(73.3,-163.3) scale(1.327,1.330)"><polygon points="329,456 348,447 348,495 329,495" fill="url(#gBlue)" /><path transform="translate(-198,-166)" d="M398 637 L530 641 L528 661 L395 661 Q394 648 398 637z" fill="url(#gCream)"/><polygon points="200,471 332,475 332,477 199,473" fill="#EFE9DA" /><polygon points="313,445 348,433 335,478 313,480" fill="#F2F1EE" /><path transform="translate(-198,-166)" d="M412 608 L512 611 L512 646 L411 643 Q409 626 412 608z" fill="url(#gWhite)"/><polygon points="213,476 314,479 314,481 213,478" fill="#9d978a" /><path transform="translate(-198,-166)" d="M401 580 L537 585 L536 611 L400 607 Q399 594 401 580z" fill="url(#gCream2)"/><polygon points="202,417 204,417 204,440 202,440" fill="#C8402E" /><polygon points="202,440 338,443 338,445 202,442" fill="#8f8774" /><polygon points="326,375 342,377 346,420 326,419" fill="#F0EEEA" /><path transform="translate(-198,-166)" d="M401 556 L526 559 L526 582 L401 579 Q399 568 401 556z" fill="#2E3A4A"/><path transform="translate(-198,-166)" d="M403 556.5 L526 559.5 L525.5 580 L403 577 Q401 567 403 556.5z" fill="url(#gWhite)"/><path transform="translate(-198,-166)" d="M401 536 L527 540 L526 561 L401 557 Q399 546 401 536z" fill="url(#gWhite2)"/><polygon points="205,369 329,372 329,375 205,372" fill="#C77A5A" /><path transform="translate(-198,-166)" d="M401 556.5 L525 559.5 L525 560.8 L401 557.8z" fill="#56606c"/><path transform="translate(-198,-166)" d="M411 505 L536 507 L535 541 L410 538 Q408 521 411 505z" fill="url(#gWhite)"/><polygon points="213,338 338,340 338,342 213,340" fill="#35352f" /><polygon points="212,371 337,374 337,376 212,373" fill="#6f6a60" /><polygon points="214,312 219,303 219,339 215,336" fill="#F1EFEA" /><polygon points="219,303 338,305 338,341 219,339" fill="url(#gTan)" /><polygon points="219,337 338,339 338,341 219,339" fill="#5f5a4f" /><polygon points="329,268 342,263 344,304 330,308" fill="#F4EEE6" /><path transform="translate(-198,-166)" d="M395 432 L527 434 L528 474 L394 467 Q392 450 395 432z" fill="url(#gCream)"/><polygon points="196,299 330,306 330,308 196,301" fill="#a0978a" /><polygon points="199,262 206,254 206,266" fill="#EEEDEA" /><polygon points="326,255 342,252 339,268 326,272" fill="#F1F0ED" /><path transform="translate(-198,-166)" d="M405 418 L526 421 L524 438 L404 436 Q402 427 405 418z" fill="url(#gWhite2)"/><polygon points="210,250 328,253 328,255 208,252" fill="#B8705A" /><path transform="translate(-198,-166)" d="M417 383 L540 385 L541 418 L416 417 Q413 400 417 383z" fill="url(#gWhite)"/><polygon points="339,239 343,238 345,254 339,253" fill="#EEEDEA" /><polygon points="221,210 344,212 343,219 219,217" fill="#2A3031" /><polygon points="218,249 343,251 343,253 218,252" fill="#40464c" /></g></svg></div></div><div class="a" style="left:27px;top:448px;width:82px;height:47px;background:#fff;border:1px solid #CFCFCF"></div><div class="a" style="left:29px;top:450px;width:78px;height:44px;overflow:hidden"><div class="a" style="left:0;top:0;width:880px;height:495px;transform:scale(0.08864);transform-origin:0 0"><div class="a" style="left:0;top:0;width:880px;height:495px;background:linear-gradient(#d9d9d9 0%,#f4f4f4 40%,#fff 60%,#fff 100%)"></div><div class="t" style="left:323px;top:14.01px;font-family:'Liberation Serif';font-size:23px;line-height:23px;color:#111;font-weight:bold;font-style:italic;transform:scaleY(1.12);transform-origin:0 85%;-webkit-text-stroke-width:7px;letter-spacing:0.2px;letter-spacing:0">-3 Column Layout Page-</div><div class="t" style="left:9px;top:54.62px;font-family:'Liberation Serif';font-size:24px;line-height:24px;color:#111;font-weight:bold;font-style:italic;transform:scaleY(1.12);transform-origin:0 85%;-webkit-text-stroke-width:7px;letter-spacing:0.2px">Reading <span style="color:#159BD6">Paragraph 1</span></div><div class="t" style="left:328px;top:54.62px;font-family:'Liberation Serif';font-size:24px;line-height:24px;color:#111;font-weight:bold;font-style:italic;transform:scaleY(1.12);transform-origin:0 85%;-webkit-text-stroke-width:7px;letter-spacing:0.2px">Reading <span style="color:#159BD6">Paragraph 2</span></div><div class="t" style="left:645px;top:54.62px;font-family:'Liberation Serif';font-size:24px;line-height:24px;color:#111;font-weight:bold;font-style:italic;transform:scaleY(1.12);transform-origin:0 85%;-webkit-text-stroke-width:7px;letter-spacing:0.2px">Reading <span style="color:#159BD6">Paragraph 3</span></div><svg class="a" style="left:0;top:0" width="880" height="495"><polygon points="35.20,84.50 37.25,89.98 43.09,90.24 38.52,93.88 40.08,99.51 35.20,96.29 30.32,99.51 31.88,93.88 27.31,90.24 33.15,89.98" fill="#111"/><polygon points="118.30,84.50 120.35,89.98 126.19,90.24 121.62,93.88 123.18,99.51 118.30,96.29 113.42,99.51 114.98,93.88 110.41,90.24 116.25,89.98" fill="#111"/><polygon points="200.20,84.50 202.25,89.98 208.09,90.24 203.52,93.88 205.08,99.51 200.20,96.29 195.32,99.51 196.88,93.88 192.31,90.24 198.15,89.98" fill="#111"/><polygon points="356.60,84.50 358.65,89.98 364.49,90.24 359.92,93.88 361.48,99.51 356.60,96.29 351.72,99.51 353.28,93.88 348.71,90.24 354.55,89.98" fill="#111"/><polygon points="439.50,84.50 441.55,89.98 447.39,90.24 442.82,93.88 444.38,99.51 439.50,96.29 434.62,99.51 436.18,93.88 431.61,90.24 437.45,89.98" fill="#111"/><polygon points="521.00,84.50 523.05,89.98 528.89,90.24 524.32,93.88 525.88,99.51 521.00,96.29 516.12,99.51 517.68,93.88 513.11,90.24 518.95,89.98" fill="#111"/><polygon points="673.70,84.50 675.75,89.98 681.59,90.24 677.02,93.88 678.58,99.51 673.70,96.29 668.82,99.51 670.38,93.88 665.81,90.24 671.65,89.98" fill="#111"/><polygon points="756.00,84.50 758.05,89.98 763.89,90.24 759.32,93.88 760.88,99.51 756.00,96.29 751.12,99.51 752.68,93.88 748.11,90.24 753.95,89.98" fill="#111"/><polygon points="838.00,84.50 840.05,89.98 845.89,90.24 841.32,93.88 842.88,99.51 838.00,96.29 833.12,99.51 834.68,93.88 830.11,90.24 835.95,89.98" fill="#111"/></svg><div class="t" style="left:25px;top:132.07px;font-size:14.4px;line-height:14.4px;color:#159DD6;transform:scaleY(1.1);transform-origin:0 13.03px">This is a placeholder for</div><div class="t" style="left:25px;top:151.87px;font-size:14.4px;line-height:14.4px;color:#159DD6;transform:scaleY(1.1);transform-origin:0 13.03px">your text. This is here to</div><div class="t" style="left:25px;top:171.67px;font-size:14.4px;line-height:14.4px;color:#159DD6;transform:scaleY(1.1);transform-origin:0 13.03px">give you an idea of what</div><div class="t" style="left:25px;top:191.47px;font-size:14.4px;line-height:14.4px;color:#159DD6;transform:scaleY(1.1);transform-origin:0 13.03px">the text may look like in</div><div class="t" style="left:25px;top:211.27px;font-size:14.4px;line-height:14.4px;color:#159DD6;transform:scaleY(1.1);transform-origin:0 13.03px">an area that is dedicated</div><div class="t" style="left:25px;top:231.07px;font-size:14.4px;line-height:14.4px;color:#159DD6;transform:scaleY(1.1);transform-origin:0 13.03px">to text. Putting your text</div><div class="t" style="left:25px;top:250.87px;font-size:14.4px;line-height:14.4px;color:#159DD6;transform:scaleY(1.1);transform-origin:0 13.03px">here may look similar.</div><div class="t" style="left:25px;top:270.67px;font-size:14.4px;line-height:14.4px;color:#159DD6;transform:scaleY(1.1);transform-origin:0 13.03px">However it may not look</div><div class="t" style="left:25px;top:290.47px;font-size:14.4px;line-height:14.4px;color:#159DD6;transform:scaleY(1.1);transform-origin:0 13.03px">exact to this example.</div><div class="t" style="left:25px;top:330.07px;font-size:14.4px;line-height:14.4px;color:#159DD6;transform:scaleY(1.1);transform-origin:0 13.03px">This is a placeholder for</div><div class="t" style="left:25px;top:349.87px;font-size:14.4px;line-height:14.4px;color:#159DD6;transform:scaleY(1.1);transform-origin:0 13.03px">your text. This is here to</div><div class="t" style="left:25px;top:369.67px;font-size:14.4px;line-height:14.4px;color:#159DD6;transform:scaleY(1.1);transform-origin:0 13.03px">give you an idea of what</div><div class="t" style="left:25px;top:389.47px;font-size:14.4px;line-height:14.4px;color:#159DD6;transform:scaleY(1.1);transform-origin:0 13.03px">the text may look like in</div><div class="t" style="left:25px;top:409.27px;font-size:14.4px;line-height:14.4px;color:#159DD6;transform:scaleY(1.1);transform-origin:0 13.03px">an area that is dedicated</div><div class="t" style="left:25px;top:429.07px;font-size:14.4px;line-height:14.4px;color:#159DD6;transform:scaleY(1.1);transform-origin:0 13.03px">to text.</div><div class="t" style="left:360.5px;top:132.07px;font-size:14.4px;line-height:14.4px;color:#159DD6;transform:scaleY(1.1);transform-origin:0 13.03px">This is a placeholder for</div><div class="t" style="left:360.5px;top:151.87px;font-size:14.4px;line-height:14.4px;color:#159DD6;transform:scaleY(1.1);transform-origin:0 13.03px">your text. This is here to</div><div class="t" style="left:360.5px;top:171.67px;font-size:14.4px;line-height:14.4px;color:#159DD6;transform:scaleY(1.1);transform-origin:0 13.03px">give you an idea of what</div><div class="t" style="left:360.5px;top:191.47px;font-size:14.4px;line-height:14.4px;color:#159DD6;transform:scaleY(1.1);transform-origin:0 13.03px">the text may look like in</div><div class="t" style="left:360.5px;top:211.27px;font-size:14.4px;line-height:14.4px;color:#159DD6;transform:scaleY(1.1);transform-origin:0 13.03px">an area that is dedicated</div><div class="t" style="left:360.5px;top:231.07px;font-size:14.4px;line-height:14.4px;color:#159DD6;transform:scaleY(1.1);transform-origin:0 13.03px">to text. Putting your text</div><div class="t" style="left:360.5px;top:250.87px;font-size:14.4px;line-height:14.4px;color:#159DD6;transform:scaleY(1.1);transform-origin:0 13.03px">here may look similar.</div><div class="t" style="left:360.5px;top:270.67px;font-size:14.4px;line-height:14.4px;color:#159DD6;transform:scaleY(1.1);transform-origin:0 13.03px">However it may not look</div><div class="t" style="left:360.5px;top:290.47px;font-size:14.4px;line-height:14.4px;color:#159DD6;transform:scaleY(1.1);transform-origin:0 13.03px">exact to this example.</div><div class="t" style="left:360.5px;top:330.07px;font-size:14.4px;line-height:14.4px;color:#159DD6;transform:scaleY(1.1);transform-origin:0 13.03px">This is a placeholder for</div><div class="t" style="left:360.5px;top:349.87px;font-size:14.4px;line-height:14.4px;color:#159DD6;transform:scaleY(1.1);transform-origin:0 13.03px">your text. This is here to</div><div class="t" style="left:360.5px;top:369.67px;font-size:14.4px;line-height:14.4px;color:#159DD6;transform:scaleY(1.1);transform-origin:0 13.03px">give you an idea of what</div><div class="t" style="left:360.5px;top:389.47px;font-size:14.4px;line-height:14.4px;color:#159DD6;transform:scaleY(1.1);transform-origin:0 13.03px">the text may look like in</div><div class="t" style="left:360.5px;top:409.27px;font-size:14.4px;line-height:14.4px;color:#159DD6;transform:scaleY(1.1);transform-origin:0 13.03px">an area that is dedicated</div><div class="t" style="left:360.5px;top:429.07px;font-size:14.4px;line-height:14.4px;color:#159DD6;transform:scaleY(1.1);transform-origin:0 13.03px">to text.</div><div class="t" style="left:696px;top:132.07px;font-size:14.4px;line-height:14.4px;color:#159DD6;transform:scaleY(1.1);transform-origin:0 13.03px">This is a placeholder for</div><div class="t" style="left:696px;top:151.87px;font-size:14.4px;line-height:14.4px;color:#159DD6;transform:scaleY(1.1);transform-origin:0 13.03px">your text. This is here to</div><div class="t" style="left:696px;top:171.67px;font-size:14.4px;line-height:14.4px;color:#159DD6;transform:scaleY(1.1);transform-origin:0 13.03px">give you an idea of what</div><div class="t" style="left:696px;top:191.47px;font-size:14.4px;line-height:14.4px;color:#159DD6;transform:scaleY(1.1);transform-origin:0 13.03px">the text may look like in</div><div class="t" style="left:696px;top:211.27px;font-size:14.4px;line-height:14.4px;color:#159DD6;transform:scaleY(1.1);transform-origin:0 13.03px">an area that is dedicated</div><div class="t" style="left:696px;top:231.07px;font-size:14.4px;line-height:14.4px;color:#159DD6;transform:scaleY(1.1);transform-origin:0 13.03px">to text. Putting your text</div><div class="t" style="left:696px;top:250.87px;font-size:14.4px;line-height:14.4px;color:#159DD6;transform:scaleY(1.1);transform-origin:0 13.03px">here may look similar.</div><div class="t" style="left:696px;top:270.67px;font-size:14.4px;line-height:14.4px;color:#159DD6;transform:scaleY(1.1);transform-origin:0 13.03px">However it may not look</div><div class="t" style="left:696px;top:290.47px;font-size:14.4px;line-height:14.4px;color:#159DD6;transform:scaleY(1.1);transform-origin:0 13.03px">exact to this example.</div><div class="t" style="left:696px;top:330.07px;font-size:14.4px;line-height:14.4px;color:#159DD6;transform:scaleY(1.1);transform-origin:0 13.03px">This is a placeholder for</div><div class="t" style="left:696px;top:349.87px;font-size:14.4px;line-height:14.4px;color:#159DD6;transform:scaleY(1.1);transform-origin:0 13.03px">your text. This is here to</div><div class="t" style="left:696px;top:369.67px;font-size:14.4px;line-height:14.4px;color:#159DD6;transform:scaleY(1.1);transform-origin:0 13.03px">give you an idea of what</div><div class="t" style="left:696px;top:389.47px;font-size:14.4px;line-height:14.4px;color:#159DD6;transform:scaleY(1.1);transform-origin:0 13.03px">the text may look like in</div><div class="t" style="left:696px;top:409.27px;font-size:14.4px;line-height:14.4px;color:#159DD6;transform:scaleY(1.1);transform-origin:0 13.03px">an area that is dedicated</div><div class="t" style="left:696px;top:429.07px;font-size:14.4px;line-height:14.4px;color:#159DD6;transform:scaleY(1.1);transform-origin:0 13.03px">to text.</div><svg class="a" style="left:0;top:0" width="880" height="495"><polygon points="329,456 348,447 348,495 329,495" fill="url(#gBlue)" /><path transform="translate(-198,-166)" d="M398 637 L530 641 L528 661 L395 661 Q394 648 398 637z" fill="url(#gCream)"/><polygon points="200,471 332,475 332,477 199,473" fill="#EFE9DA" /><polygon points="313,445 348,433 335,478 313,480" fill="#F2F1EE" /><path transform="translate(-198,-166)" d="M412 608 L512 611 L512 646 L411 643 Q409 626 412 608z" fill="url(#gWhite)"/><polygon points="213,476 314,479 314,481 213,478" fill="#9d978a" /><path transform="translate(-198,-166)" d="M401 580 L537 585 L536 611 L400 607 Q399 594 401 580z" fill="url(#gCream2)"/><polygon points="202,417 204,417 204,440 202,440" fill="#C8402E" /><polygon points="202,440 338,443 338,445 202,442" fill="#8f8774" /><polygon points="326,375 342,377 346,420 326,419" fill="#F0EEEA" /><path transform="translate(-198,-166)" d="M401 556 L526 559 L526 582 L401 579 Q399 568 401 556z" fill="#2E3A4A"/><path transform="translate(-198,-166)" d="M403 556.5 L526 559.5 L525.5 580 L403 577 Q401 567 403 556.5z" fill="url(#gWhite)"/><path transform="translate(-198,-166)" d="M401 536 L527 540 L526 561 L401 557 Q399 546 401 536z" fill="url(#gWhite2)"/><polygon points="205,369 329,372 329,375 205,372" fill="#C77A5A" /><path transform="translate(-198,-166)" d="M401 556.5 L525 559.5 L525 560.8 L401 557.8z" fill="#56606c"/><path transform="translate(-198,-166)" d="M411 505 L536 507 L535 541 L410 538 Q408 521 411 505z" fill="url(#gWhite)"/><polygon points="213,338 338,340 338,342 213,340" fill="#35352f" /><polygon points="212,371 337,374 337,376 212,373" fill="#6f6a60" /><polygon points="214,312 219,303 219,339 215,336" fill="#F1EFEA" /><polygon points="219,303 338,305 338,341 219,339" fill="url(#gTan)" /><polygon points="219,337 338,339 338,341 219,339" fill="#5f5a4f" /><polygon points="329,268 342,263 344,304 330,308" fill="#F4EEE6" /><path transform="translate(-198,-166)" d="M395 432 L527 434 L528 474 L394 467 Q392 450 395 432z" fill="url(#gCream)"/><polygon points="196,299 330,306 330,308 196,301" fill="#a0978a" /><polygon points="199,262 206,254 206,266" fill="#EEEDEA" /><polygon points="326,255 342,252 339,268 326,272" fill="#F1F0ED" /><path transform="translate(-198,-166)" d="M405 418 L526 421 L524 438 L404 436 Q402 427 405 418z" fill="url(#gWhite2)"/><polygon points="210,250 328,253 328,255 208,252" fill="#B8705A" /><path transform="translate(-198,-166)" d="M417 383 L540 385 L541 418 L416 417 Q413 400 417 383z" fill="url(#gWhite)"/><polygon points="339,239 343,238 345,254 339,253" fill="#EEEDEA" /><polygon points="221,210 344,212 343,219 219,217" fill="#2A3031" /><polygon points="218,249 343,251 343,253 218,252" fill="#40464c" /><polygon points="664,456 683,447 683,495 664,495" fill="url(#gBlue)" /><path transform="translate(137,-166)" d="M398 637 L530 641 L528 661 L395 661 Q394 648 398 637z" fill="url(#gCream)"/><polygon points="535,471 667,475 667,477 534,473" fill="#EFE9DA" /><polygon points="648,445 683,433 670,478 648,480" fill="#F2F1EE" /><path transform="translate(137,-166)" d="M412 608 L512 611 L512 646 L411 643 Q409 626 412 608z" fill="url(#gWhite)"/><polygon points="548,476 649,479 649,481 548,478" fill="#9d978a" /><path transform="translate(137,-166)" d="M401 580 L537 585 L536 611 L400 607 Q399 594 401 580z" fill="url(#gCream2)"/><polygon points="537,417 539,417 539,440 537,440" fill="#C8402E" /><polygon points="537,440 673,443 673,445 537,442" fill="#8f8774" /><polygon points="661,375 677,377 681,420 661,419" fill="#F0EEEA" /><path transform="translate(137,-166)" d="M401 556 L526 559 L526 582 L401 579 Q399 568 401 556z" fill="#2E3A4A"/><path transform="translate(137,-166)" d="M403 556.5 L526 559.5 L525.5 580 L403 577 Q401 567 403 556.5z" fill="url(#gWhite)"/><path transform="translate(137,-166)" d="M401 536 L527 540 L526 561 L401 557 Q399 546 401 536z" fill="url(#gWhite2)"/><polygon points="540,369 664,372 664,375 540,372" fill="#C77A5A" /><path transform="translate(137,-166)" d="M401 556.5 L525 559.5 L525 560.8 L401 557.8z" fill="#56606c"/><path transform="translate(137,-166)" d="M411 505 L536 507 L535 541 L410 538 Q408 521 411 505z" fill="url(#gWhite)"/><polygon points="548,338 673,340 673,342 548,340" fill="#35352f" /><polygon points="547,371 672,374 672,376 547,373" fill="#6f6a60" /><polygon points="549,312 554,303 554,339 550,336" fill="#F1EFEA" /><polygon points="554,303 673,305 673,341 554,339" fill="url(#gTan)" /><polygon points="554,337 673,339 673,341 554,339" fill="#5f5a4f" /><polygon points="664,268 677,263 679,304 665,308" fill="#F4EEE6" /><path transform="translate(137,-166)" d="M395 432 L527 434 L528 474 L394 467 Q392 450 395 432z" fill="url(#gCream)"/><polygon points="531,299 665,306 665,308 531,301" fill="#a0978a" /><polygon points="534,262 541,254 541,266" fill="#EEEDEA" /><polygon points="661,255 677,252 674,268 661,272" fill="#F1F0ED" /><path transform="translate(137,-166)" d="M405 418 L526 421 L524 438 L404 436 Q402 427 405 418z" fill="url(#gWhite2)"/><polygon points="545,250 663,253 663,255 543,252" fill="#B8705A" /><path transform="translate(137,-166)" d="M417 383 L540 385 L541 418 L416 417 Q413 400 417 383z" fill="url(#gWhite)"/><polygon points="674,239 678,238 680,254 674,253" fill="#EEEDEA" /><polygon points="556,210 679,212 678,219 554,217" fill="#2A3031" /><polygon points="553,249 678,251 678,253 553,252" fill="#40464c" /></svg></div></div><div class="a" style="left:25px;top:512px;width:86px;height:52px;background:#fff;border:3px solid #C94A26"></div><div class="a" style="left:29px;top:516px;width:78px;height:44px;overflow:hidden"><div class="a" style="left:0;top:0;width:880px;height:495px;transform:scale(0.08864);transform-origin:0 0"><div class="a" style="left:0;top:0;width:880px;height:495px;background:linear-gradient(#252525 0%,#222 35%,#151515 75%,#0f0f0f 100%)"></div><div class="t" style="left:323px;top:14.01px;font-family:'Liberation Serif';font-size:23px;line-height:23px;color:#fff;font-weight:bold;font-style:italic;transform:scaleY(1.12);transform-origin:0 85%;-webkit-text-stroke-width:7px;letter-spacing:0.2px;letter-spacing:0">-3 Column Layout Page-</div><div class="t" style="left:9px;top:54.62px;font-family:'Liberation Serif';font-size:24px;line-height:24px;color:#fff;font-weight:bold;font-style:italic;transform:scaleY(1.12);transform-origin:0 85%;-webkit-text-stroke-width:7px;letter-spacing:0.2px">Reading <span style="color:#159BD6">Paragraph 1</span></div><div class="t" style="left:328px;top:54.62px;font-family:'Liberation Serif';font-size:24px;line-height:24px;color:#fff;font-weight:bold;font-style:italic;transform:scaleY(1.12);transform-origin:0 85%;-webkit-text-stroke-width:7px;letter-spacing:0.2px">Reading <span style="color:#159BD6">Paragraph 2</span></div><div class="t" style="left:645px;top:54.62px;font-family:'Liberation Serif';font-size:24px;line-height:24px;color:#fff;font-weight:bold;font-style:italic;transform:scaleY(1.12);transform-origin:0 85%;-webkit-text-stroke-width:7px;letter-spacing:0.2px">Reading <span style="color:#159BD6">Paragraph 3</span></div><svg class="a" style="left:0;top:0" width="880" height="495"><polygon points="35.20,84.50 37.25,89.98 43.09,90.24 38.52,93.88 40.08,99.51 35.20,96.29 30.32,99.51 31.88,93.88 27.31,90.24 33.15,89.98" fill="#fff"/><polygon points="118.30,84.50 120.35,89.98 126.19,90.24 121.62,93.88 123.18,99.51 118.30,96.29 113.42,99.51 114.98,93.88 110.41,90.24 116.25,89.98" fill="#fff"/><polygon points="200.20,84.50 202.25,89.98 208.09,90.24 203.52,93.88 205.08,99.51 200.20,96.29 195.32,99.51 196.88,93.88 192.31,90.24 198.15,89.98" fill="#fff"/><polygon points="356.60,84.50 358.65,89.98 364.49,90.24 359.92,93.88 361.48,99.51 356.60,96.29 351.72,99.51 353.28,93.88 348.71,90.24 354.55,89.98" fill="#fff"/><polygon points="439.50,84.50 441.55,89.98 447.39,90.24 442.82,93.88 444.38,99.51 439.50,96.29 434.62,99.51 436.18,93.88 431.61,90.24 437.45,89.98" fill="#fff"/><polygon points="521.00,84.50 523.05,89.98 528.89,90.24 524.32,93.88 525.88,99.51 521.00,96.29 516.12,99.51 517.68,93.88 513.11,90.24 518.95,89.98" fill="#fff"/><polygon points="673.70,84.50 675.75,89.98 681.59,90.24 677.02,93.88 678.58,99.51 673.70,96.29 668.82,99.51 670.38,93.88 665.81,90.24 671.65,89.98" fill="#fff"/><polygon points="756.00,84.50 758.05,89.98 763.89,90.24 759.32,93.88 760.88,99.51 756.00,96.29 751.12,99.51 752.68,93.88 748.11,90.24 753.95,89.98" fill="#fff"/><polygon points="838.00,84.50 840.05,89.98 845.89,90.24 841.32,93.88 842.88,99.51 838.00,96.29 833.12,99.51 834.68,93.88 830.11,90.24 835.95,89.98" fill="#fff"/></svg><div class="t" style="left:25px;top:132.07px;font-size:14.4px;line-height:14.4px;color:#159DD6;transform:scaleY(1.1);transform-origin:0 13.03px">This is a placeholder for</div><div class="t" style="left:25px;top:151.87px;font-size:14.4px;line-height:14.4px;color:#159DD6;transform:scaleY(1.1);transform-origin:0 13.03px">your text. This is here to</div><div class="t" style="left:25px;top:171.67px;font-size:14.4px;line-height:14.4px;color:#159DD6;transform:scaleY(1.1);transform-origin:0 13.03px">give you an idea of what</div><div class="t" style="left:25px;top:191.47px;font-size:14.4px;line-height:14.4px;color:#159DD6;transform:scaleY(1.1);transform-origin:0 13.03px">the text may look like in</div><div class="t" style="left:25px;top:211.27px;font-size:14.4px;line-height:14.4px;color:#159DD6;transform:scaleY(1.1);transform-origin:0 13.03px">an area that is dedicated</div><div class="t" style="left:25px;top:231.07px;font-size:14.4px;line-height:14.4px;color:#159DD6;transform:scaleY(1.1);transform-origin:0 13.03px">to text. Putting your text</div><div class="t" style="left:25px;top:250.87px;font-size:14.4px;line-height:14.4px;color:#159DD6;transform:scaleY(1.1);transform-origin:0 13.03px">here may look similar.</div><div class="t" style="left:25px;top:270.67px;font-size:14.4px;line-height:14.4px;color:#159DD6;transform:scaleY(1.1);transform-origin:0 13.03px">However it may not look</div><div class="t" style="left:25px;top:290.47px;font-size:14.4px;line-height:14.4px;color:#159DD6;transform:scaleY(1.1);transform-origin:0 13.03px">exact to this example.</div><div class="t" style="left:25px;top:330.07px;font-size:14.4px;line-height:14.4px;color:#159DD6;transform:scaleY(1.1);transform-origin:0 13.03px">This is a placeholder for</div><div class="t" style="left:25px;top:349.87px;font-size:14.4px;line-height:14.4px;color:#159DD6;transform:scaleY(1.1);transform-origin:0 13.03px">your text. This is here to</div><div class="t" style="left:25px;top:369.67px;font-size:14.4px;line-height:14.4px;color:#159DD6;transform:scaleY(1.1);transform-origin:0 13.03px">give you an idea of what</div><div class="t" style="left:25px;top:389.47px;font-size:14.4px;line-height:14.4px;color:#159DD6;transform:scaleY(1.1);transform-origin:0 13.03px">the text may look like in</div><div class="t" style="left:25px;top:409.27px;font-size:14.4px;line-height:14.4px;color:#159DD6;transform:scaleY(1.1);transform-origin:0 13.03px">an area that is dedicated</div><div class="t" style="left:25px;top:429.07px;font-size:14.4px;line-height:14.4px;color:#159DD6;transform:scaleY(1.1);transform-origin:0 13.03px">to text.</div><div class="t" style="left:360.5px;top:132.07px;font-size:14.4px;line-height:14.4px;color:#159DD6;transform:scaleY(1.1);transform-origin:0 13.03px">This is a placeholder for</div><div class="t" style="left:360.5px;top:151.87px;font-size:14.4px;line-height:14.4px;color:#159DD6;transform:scaleY(1.1);transform-origin:0 13.03px">your text. This is here to</div><div class="t" style="left:360.5px;top:171.67px;font-size:14.4px;line-height:14.4px;color:#159DD6;transform:scaleY(1.1);transform-origin:0 13.03px">give you an idea of what</div><div class="t" style="left:360.5px;top:191.47px;font-size:14.4px;line-height:14.4px;color:#159DD6;transform:scaleY(1.1);transform-origin:0 13.03px">the text may look like in</div><div class="t" style="left:360.5px;top:211.27px;font-size:14.4px;line-height:14.4px;color:#159DD6;transform:scaleY(1.1);transform-origin:0 13.03px">an area that is dedicated</div><div class="t" style="left:360.5px;top:231.07px;font-size:14.4px;line-height:14.4px;color:#159DD6;transform:scaleY(1.1);transform-origin:0 13.03px">to text. Putting your text</div><div class="t" style="left:360.5px;top:250.87px;font-size:14.4px;line-height:14.4px;color:#159DD6;transform:scaleY(1.1);transform-origin:0 13.03px">here may look similar.</div><div class="t" style="left:360.5px;top:270.67px;font-size:14.4px;line-height:14.4px;color:#159DD6;transform:scaleY(1.1);transform-origin:0 13.03px">However it may not look</div><div class="t" style="left:360.5px;top:290.47px;font-size:14.4px;line-height:14.4px;color:#159DD6;transform:scaleY(1.1);transform-origin:0 13.03px">exact to this example.</div><div class="t" style="left:360.5px;top:330.07px;font-size:14.4px;line-height:14.4px;color:#159DD6;transform:scaleY(1.1);transform-origin:0 13.03px">This is a placeholder for</div><div class="t" style="left:360.5px;top:349.87px;font-size:14.4px;line-height:14.4px;color:#159DD6;transform:scaleY(1.1);transform-origin:0 13.03px">your text. This is here to</div><div class="t" style="left:360.5px;top:369.67px;font-size:14.4px;line-height:14.4px;color:#159DD6;transform:scaleY(1.1);transform-origin:0 13.03px">give you an idea of what</div><div class="t" style="left:360.5px;top:389.47px;font-size:14.4px;line-height:14.4px;color:#159DD6;transform:scaleY(1.1);transform-origin:0 13.03px">the text may look like in</div><div class="t" style="left:360.5px;top:409.27px;font-size:14.4px;line-height:14.4px;color:#159DD6;transform:scaleY(1.1);transform-origin:0 13.03px">an area that is dedicated</div><div class="t" style="left:360.5px;top:429.07px;font-size:14.4px;line-height:14.4px;color:#159DD6;transform:scaleY(1.1);transform-origin:0 13.03px">to text.</div><div class="t" style="left:696px;top:132.07px;font-size:14.4px;line-height:14.4px;color:#159DD6;transform:scaleY(1.1);transform-origin:0 13.03px">This is a placeholder for</div><div class="t" style="left:696px;top:151.87px;font-size:14.4px;line-height:14.4px;color:#159DD6;transform:scaleY(1.1);transform-origin:0 13.03px">your text. This is here to</div><div class="t" style="left:696px;top:171.67px;font-size:14.4px;line-height:14.4px;color:#159DD6;transform:scaleY(1.1);transform-origin:0 13.03px">give you an idea of what</div><div class="t" style="left:696px;top:191.47px;font-size:14.4px;line-height:14.4px;color:#159DD6;transform:scaleY(1.1);transform-origin:0 13.03px">the text may look like in</div><div class="t" style="left:696px;top:211.27px;font-size:14.4px;line-height:14.4px;color:#159DD6;transform:scaleY(1.1);transform-origin:0 13.03px">an area that is dedicated</div><div class="t" style="left:696px;top:231.07px;font-size:14.4px;line-height:14.4px;color:#159DD6;transform:scaleY(1.1);transform-origin:0 13.03px">to text. Putting your text</div><div class="t" style="left:696px;top:250.87px;font-size:14.4px;line-height:14.4px;color:#159DD6;transform:scaleY(1.1);transform-origin:0 13.03px">here may look similar.</div><div class="t" style="left:696px;top:270.67px;font-size:14.4px;line-height:14.4px;color:#159DD6;transform:scaleY(1.1);transform-origin:0 13.03px">However it may not look</div><div class="t" style="left:696px;top:290.47px;font-size:14.4px;line-height:14.4px;color:#159DD6;transform:scaleY(1.1);transform-origin:0 13.03px">exact to this example.</div><div class="t" style="left:696px;top:330.07px;font-size:14.4px;line-height:14.4px;color:#159DD6;transform:scaleY(1.1);transform-origin:0 13.03px">This is a placeholder for</div><div class="t" style="left:696px;top:349.87px;font-size:14.4px;line-height:14.4px;color:#159DD6;transform:scaleY(1.1);transform-origin:0 13.03px">your text. This is here to</div><div class="t" style="left:696px;top:369.67px;font-size:14.4px;line-height:14.4px;color:#159DD6;transform:scaleY(1.1);transform-origin:0 13.03px">give you an idea of what</div><div class="t" style="left:696px;top:389.47px;font-size:14.4px;line-height:14.4px;color:#159DD6;transform:scaleY(1.1);transform-origin:0 13.03px">the text may look like in</div><div class="t" style="left:696px;top:409.27px;font-size:14.4px;line-height:14.4px;color:#159DD6;transform:scaleY(1.1);transform-origin:0 13.03px">an area that is dedicated</div><div class="t" style="left:696px;top:429.07px;font-size:14.4px;line-height:14.4px;color:#159DD6;transform:scaleY(1.1);transform-origin:0 13.03px">to text.</div><svg class="a" style="left:0;top:0" width="880" height="495"><polygon points="329,456 348,447 348,495 329,495" fill="url(#gBlue)" /><path transform="translate(-198,-166)" d="M398 637 L530 641 L528 661 L395 661 Q394 648 398 637z" fill="url(#gCream)"/><polygon points="200,471 332,475 332,477 199,473" fill="#EFE9DA" /><polygon points="313,445 348,433 335,478 313,480" fill="#F2F1EE" /><path transform="translate(-198,-166)" d="M412 608 L512 611 L512 646 L411 643 Q409 626 412 608z" fill="url(#gWhite)"/><polygon points="213,476 314,479 314,481 213,478" fill="#9d978a" /><path transform="translate(-198,-166)" d="M401 580 L537 585 L536 611 L400 607 Q399 594 401 580z" fill="url(#gCream2)"/><polygon points="202,417 204,417 204,440 202,440" fill="#C8402E" /><polygon points="202,440 338,443 338,445 202,442" fill="#8f8774" /><polygon points="326,375 342,377 346,420 326,419" fill="#F0EEEA" /><path transform="translate(-198,-166)" d="M401 556 L526 559 L526 582 L401 579 Q399 568 401 556z" fill="#2E3A4A"/><path transform="translate(-198,-166)" d="M403 556.5 L526 559.5 L525.5 580 L403 577 Q401 567 403 556.5z" fill="url(#gWhite)"/><path transform="translate(-198,-166)" d="M401 536 L527 540 L526 561 L401 557 Q399 546 401 536z" fill="url(#gWhite2)"/><polygon points="205,369 329,372 329,375 205,372" fill="#C77A5A" /><path transform="translate(-198,-166)" d="M401 556.5 L525 559.5 L525 560.8 L401 557.8z" fill="#56606c"/><path transform="translate(-198,-166)" d="M411 505 L536 507 L535 541 L410 538 Q408 521 411 505z" fill="url(#gWhite)"/><polygon points="213,338 338,340 338,342 213,340" fill="#35352f" /><polygon points="212,371 337,374 337,376 212,373" fill="#6f6a60" /><polygon points="214,312 219,303 219,339 215,336" fill="#F1EFEA" /><polygon points="219,303 338,305 338,341 219,339" fill="url(#gTan)" /><polygon points="219,337 338,339 338,341 219,339" fill="#5f5a4f" /><polygon points="329,268 342,263 344,304 330,308" fill="#F4EEE6" /><path transform="translate(-198,-166)" d="M395 432 L527 434 L528 474 L394 467 Q392 450 395 432z" fill="url(#gCream)"/><polygon points="196,299 330,306 330,308 196,301" fill="#a0978a" /><polygon points="199,262 206,254 206,266" fill="#EEEDEA" /><polygon points="326,255 342,252 339,268 326,272" fill="#F1F0ED" /><path transform="translate(-198,-166)" d="M405 418 L526 421 L524 438 L404 436 Q402 427 405 418z" fill="url(#gWhite2)"/><polygon points="210,250 328,253 328,255 208,252" fill="#B8705A" /><path transform="translate(-198,-166)" d="M417 383 L540 385 L541 418 L416 417 Q413 400 417 383z" fill="url(#gWhite)"/><polygon points="339,239 343,238 345,254 339,253" fill="#EEEDEA" /><polygon points="221,210 344,212 343,219 219,217" fill="#2A3031" /><polygon points="218,249 343,251 343,253 218,252" fill="#40464c" /><polygon points="664,456 683,447 683,495 664,495" fill="url(#gBlue)" /><path transform="translate(137,-166)" d="M398 637 L530 641 L528 661 L395 661 Q394 648 398 637z" fill="url(#gCream)"/><polygon points="535,471 667,475 667,477 534,473" fill="#EFE9DA" /><polygon points="648,445 683,433 670,478 648,480" fill="#F2F1EE" /><path transform="translate(137,-166)" d="M412 608 L512 611 L512 646 L411 643 Q409 626 412 608z" fill="url(#gWhite)"/><polygon points="548,476 649,479 649,481 548,478" fill="#9d978a" /><path transform="translate(137,-166)" d="M401 580 L537 585 L536 611 L400 607 Q399 594 401 580z" fill="url(#gCream2)"/><polygon points="537,417 539,417 539,440 537,440" fill="#C8402E" /><polygon points="537,440 673,443 673,445 537,442" fill="#8f8774" /><polygon points="661,375 677,377 681,420 661,419" fill="#F0EEEA" /><path transform="translate(137,-166)" d="M401 556 L526 559 L526 582 L401 579 Q399 568 401 556z" fill="#2E3A4A"/><path transform="translate(137,-166)" d="M403 556.5 L526 559.5 L525.5 580 L403 577 Q401 567 403 556.5z" fill="url(#gWhite)"/><path transform="translate(137,-166)" d="M401 536 L527 540 L526 561 L401 557 Q399 546 401 536z" fill="url(#gWhite2)"/><polygon points="540,369 664,372 664,375 540,372" fill="#C77A5A" /><path transform="translate(137,-166)" d="M401 556.5 L525 559.5 L525 560.8 L401 557.8z" fill="#56606c"/><path transform="translate(137,-166)" d="M411 505 L536 507 L535 541 L410 538 Q408 521 411 505z" fill="url(#gWhite)"/><polygon points="548,338 673,340 673,342 548,340" fill="#35352f" /><polygon points="547,371 672,374 672,376 547,373" fill="#6f6a60" /><polygon points="549,312 554,303 554,339 550,336" fill="#F1EFEA" /><polygon points="554,303 673,305 673,341 554,339" fill="url(#gTan)" /><polygon points="554,337 673,339 673,341 554,339" fill="#5f5a4f" /><polygon points="664,268 677,263 679,304 665,308" fill="#F4EEE6" /><path transform="translate(137,-166)" d="M395 432 L527 434 L528 474 L394 467 Q392 450 395 432z" fill="url(#gCream)"/><polygon points="531,299 665,306 665,308 531,301" fill="#a0978a" /><polygon points="534,262 541,254 541,266" fill="#EEEDEA" /><polygon points="661,255 677,252 674,268 661,272" fill="#F1F0ED" /><path transform="translate(137,-166)" d="M405 418 L526 421 L524 438 L404 436 Q402 427 405 418z" fill="url(#gWhite2)"/><polygon points="545,250 663,253 663,255 543,252" fill="#B8705A" /><path transform="translate(137,-166)" d="M417 383 L540 385 L541 418 L416 417 Q413 400 417 383z" fill="url(#gWhite)"/><polygon points="674,239 678,238 680,254 674,253" fill="#EEEDEA" /><polygon points="556,210 679,212 678,219 554,217" fill="#2A3031" /><polygon points="553,249 678,251 678,253 553,252" fill="#40464c" /></svg></div></div><div class="a" style="left:27px;top:580px;width:82px;height:47px;background:#fff;border:1px solid #CFCFCF"></div><div class="a" style="left:29px;top:582px;width:78px;height:44px;overflow:hidden"><div class="a" style="left:0;top:0;width:880px;height:495px;transform:scale(0.08864);transform-origin:0 0"><div class="a" style="left:0;top:0;width:880px;height:495px;background:#D9E1E0"></div><div class="a" style="left:0;top:0;width:880px;height:495px;filter:blur(14px)"><div class="a" style="left:-20px;top:-30px;width:60px;height:560px;background:#CFC9C3"></div><div class="a" style="left:40px;top:-30px;width:50px;height:560px;background:#D4D8D2"></div><div class="a" style="left:90px;top:-30px;width:80px;height:560px;background:#DCC9C8"></div><div class="a" style="left:170px;top:-30px;width:110px;height:560px;background:#C9D6D3"></div><div class="a" style="left:280px;top:-30px;width:110px;height:560px;background:#D5DEDC"></div><div class="a" style="left:390px;top:-30px;width:110px;height:560px;background:#DDE4E2"></div><div class="a" style="left:500px;top:-30px;width:100px;height:560px;background:#CBD8D6"></div><div class="a" style="left:600px;top:-30px;width:110px;height:560px;background:#E6EBE9"></div><div class="a" style="left:710px;top:-30px;width:80px;height:560px;background:#DDD5BD"></div><div class="a" style="left:790px;top:-30px;width:100px;height:560px;background:#D1DCDB"></div><div class="a" style="left:100px;top:60px;width:30px;height:400px;background:#b77;opacity:.18"></div><div class="a" style="left:620px;top:150px;width:60px;height:120px;background:#cb9;opacity:.3"></div></div><div class="t" style="left:0;top:18px;width:880px;text-align:center;font-family:Liberation Serif;font-weight:bold;font-style:italic;font-size:24px;line-height:24px;color:#111;-webkit-text-stroke:2px #111">General Layout Page</div><div class="a" style="left:250px;top:96px;width:10px;height:10px;background:#111;opacity:.6"></div><div class="a" style="left:325px;top:96px;width:10px;height:10px;background:#111;opacity:.6"></div><div class="a" style="left:400px;top:96px;width:10px;height:10px;background:#111;opacity:.6"></div><div class="a" style="left:475px;top:96px;width:10px;height:10px;background:#111;opacity:.6"></div><div class="a" style="left:550px;top:96px;width:10px;height:10px;background:#111;opacity:.6"></div><div class="a" style="left:625px;top:96px;width:10px;height:10px;background:#111;opacity:.6"></div><div class="t" style="left:0;top:125px;width:880px;text-align:center;font-family:Liberation Serif;font-weight:bold;font-style:italic;font-size:62px;line-height:62px;color:#111;-webkit-text-stroke:6px #111">Reading Test Quiz</div><div class="t" style="left:0;top:190px;width:880px;text-align:center;font-size:18px;line-height:18px;color:#159DD6">THINGS YOU NEED TO</div><div class="t" style="left:0;top:218px;width:880px;text-align:center;font-size:72px;line-height:72px;color:#159DD6">KNOW</div><div class="t" style="left:0;top:290px;width:880px;text-align:center;font-size:22px;line-height:22px;color:#159DD6">a little something</div><div class="a" style="left:255px;top:357px;width:400px;height:8px;background:#333"></div></div></div><div class="a" style="left:27px;top:646px;width:82px;height:47px;background:#fff;border:1px solid #CFCFCF"></div><div class="a" style="left:29px;top:648px;width:78px;height:44px;overflow:hidden"><div class="a" style="left:0;top:0;width:880px;height:495px;transform:scale(0.08864);transform-origin:0 0"><div class="a" style="left:0;top:0;width:880px;height:495px;background:#2C3031"></div><div class="a" style="left:0;top:0;width:880px;height:495px;filter:blur(14px)"><div class="a" style="left:-20px;top:-30px;width:60px;height:560px;background:#3a3431"></div><div class="a" style="left:40px;top:-30px;width:50px;height:560px;background:#383d3b"></div><div class="a" style="left:90px;top:-30px;width:80px;height:560px;background:#4d3836"></div><div class="a" style="left:170px;top:-30px;width:110px;height:560px;background:#2f3b3a"></div><div class="a" style="left:280px;top:-30px;width:110px;height:560px;background:#3a4342"></div><div class="a" style="left:390px;top:-30px;width:110px;height:560px;background:#414847"></div><div class="a" style="left:500px;top:-30px;width:100px;height:560px;background:#323b3b"></div><div class="a" style="left:600px;top:-30px;width:110px;height:560px;background:#484d4c"></div><div class="a" style="left:710px;top:-30px;width:80px;height:560px;background:#4a4636"></div><div class="a" style="left:790px;top:-30px;width:100px;height:560px;background:#353d3d"></div><div class="a" style="left:100px;top:60px;width:30px;height:400px;background:#b77;opacity:.18"></div><div class="a" style="left:620px;top:150px;width:60px;height:120px;background:#cb9;opacity:.3"></div></div><div class="t" style="left:0;top:18px;width:880px;text-align:center;font-family:Liberation Serif;font-weight:bold;font-style:italic;font-size:24px;line-height:24px;color:#fff;-webkit-text-stroke:2px #fff">General Layout Page</div><div class="a" style="left:250px;top:96px;width:10px;height:10px;background:#fff;opacity:.6"></div><div class="a" style="left:325px;top:96px;width:10px;height:10px;background:#fff;opacity:.6"></div><div class="a" style="left:400px;top:96px;width:10px;height:10px;background:#fff;opacity:.6"></div><div class="a" style="left:475px;top:96px;width:10px;height:10px;background:#fff;opacity:.6"></div><div class="a" style="left:550px;top:96px;width:10px;height:10px;background:#fff;opacity:.6"></div><div class="a" style="left:625px;top:96px;width:10px;height:10px;background:#fff;opacity:.6"></div><div class="t" style="left:0;top:125px;width:880px;text-align:center;font-family:Liberation Serif;font-weight:bold;font-style:italic;font-size:62px;line-height:62px;color:#fff;-webkit-text-stroke:6px #fff">Reading Test Quiz</div><div class="t" style="left:0;top:190px;width:880px;text-align:center;font-size:18px;line-height:18px;color:#159DD6">THINGS YOU NEED TO</div><div class="t" style="left:0;top:218px;width:880px;text-align:center;font-size:72px;line-height:72px;color:#159DD6">KNOW</div><div class="t" style="left:0;top:290px;width:880px;text-align:center;font-size:22px;line-height:22px;color:#159DD6">a little something</div></div></div><div class="t" style="left:12px;top:183.23px;font-size:14.5px;line-height:14.5px;color:#444;">3</div><svg class="a" style="left:10px;top:201px" width="13" height="10" viewBox="0 0 13 10"><polygon points="7.5,0.3 8.9,3.6 12.5,3.8 9.7,6.1 10.6,9.6 7.5,7.6 4.4,9.6 5.3,6.1 2.5,3.8 6.1,3.6" fill="#6a6a6a"/><path d="M1 3.5h2M0.5 6h2.5" stroke="#777" stroke-width="0.9"/></svg><div class="t" style="left:12px;top:249.23px;font-size:14.5px;line-height:14.5px;color:#444;">4</div><svg class="a" style="left:10px;top:267px" width="13" height="10" viewBox="0 0 13 10"><polygon points="7.5,0.3 8.9,3.6 12.5,3.8 9.7,6.1 10.6,9.6 7.5,7.6 4.4,9.6 5.3,6.1 2.5,3.8 6.1,3.6" fill="#6a6a6a"/><path d="M1 3.5h2M0.5 6h2.5" stroke="#777" stroke-width="0.9"/></svg><div class="t" style="left:12px;top:315.23px;font-size:14.5px;line-height:14.5px;color:#444;">5</div><svg class="a" style="left:10px;top:333px" width="13" height="10" viewBox="0 0 13 10"><polygon points="7.5,0.3 8.9,3.6 12.5,3.8 9.7,6.1 10.6,9.6 7.5,7.6 4.4,9.6 5.3,6.1 2.5,3.8 6.1,3.6" fill="#6a6a6a"/><path d="M1 3.5h2M0.5 6h2.5" stroke="#777" stroke-width="0.9"/></svg><div class="t" style="left:12px;top:381.23px;font-size:14.5px;line-height:14.5px;color:#444;">6</div><svg class="a" style="left:10px;top:399px" width="13" height="10" viewBox="0 0 13 10"><polygon points="7.5,0.3 8.9,3.6 12.5,3.8 9.7,6.1 10.6,9.6 7.5,7.6 4.4,9.6 5.3,6.1 2.5,3.8 6.1,3.6" fill="#6a6a6a"/><path d="M1 3.5h2M0.5 6h2.5" stroke="#777" stroke-width="0.9"/></svg><div class="t" style="left:12px;top:447.23px;font-size:14.5px;line-height:14.5px;color:#444;">7</div><svg class="a" style="left:10px;top:465px" width="13" height="10" viewBox="0 0 13 10"><polygon points="7.5,0.3 8.9,3.6 12.5,3.8 9.7,6.1 10.6,9.6 7.5,7.6 4.4,9.6 5.3,6.1 2.5,3.8 6.1,3.6" fill="#6a6a6a"/><path d="M1 3.5h2M0.5 6h2.5" stroke="#777" stroke-width="0.9"/></svg><div class="t" style="left:12px;top:513.23px;font-size:14.5px;line-height:14.5px;color:#C94A26;">8</div><svg class="a" style="left:10px;top:531px" width="13" height="10" viewBox="0 0 13 10"><polygon points="7.5,0.3 8.9,3.6 12.5,3.8 9.7,6.1 10.6,9.6 7.5,7.6 4.4,9.6 5.3,6.1 2.5,3.8 6.1,3.6" fill="#6a6a6a"/><path d="M1 3.5h2M0.5 6h2.5" stroke="#777" stroke-width="0.9"/></svg><div class="t" style="left:12px;top:579.23px;font-size:14.5px;line-height:14.5px;color:#444;">9</div><svg class="a" style="left:10px;top:597px" width="13" height="10" viewBox="0 0 13 10"><polygon points="7.5,0.3 8.9,3.6 12.5,3.8 9.7,6.1 10.6,9.6 7.5,7.6 4.4,9.6 5.3,6.1 2.5,3.8 6.1,3.6" fill="#6a6a6a"/><path d="M1 3.5h2M0.5 6h2.5" stroke="#777" stroke-width="0.9"/></svg><div class="t" style="left:4px;top:645.23px;font-size:14.5px;line-height:14.5px;color:#444;">10</div><svg class="a" style="left:10px;top:663px" width="13" height="10" viewBox="0 0 13 10"><polygon points="7.5,0.3 8.9,3.6 12.5,3.8 9.7,6.1 10.6,9.6 7.5,7.6 4.4,9.6 5.3,6.1 2.5,3.8 6.1,3.6" fill="#6a6a6a"/><path d="M1 3.5h2M0.5 6h2.5" stroke="#777" stroke-width="0.9"/></svg></div></div><div class="a" style="left:148px;top:155px;width:1px;height:521px;background:#C6C6C6"></div><div class="a" style="left:151px;top:675px;width:991px;height:1px;background:#C6C6C6"></div><div class="a" style="left:129px;top:156px;width:15px;height:520px;background:#DCDCDC"></div><div class="a" style="left:129px;top:156px;width:15px;height:15px;background:#fff;border:1px solid #ABABAB"></div><svg class="a" style="left:133px;top:161px" width="7" height="4" viewBox="0 0 7 4"><path d="M0 4L3.5 0 7 4z" fill="#666"/></svg><div class="a" style="left:129px;top:234px;width:15px;height:268px;background:#fff;border:1px solid #ABABAB"></div><div class="a" style="left:129px;top:661px;width:15px;height:15px;background:#fff;border:1px solid #ABABAB"></div><svg class="a" style="left:133px;top:666px" width="7" height="4" viewBox="0 0 7 4"><path d="M0 0h7L3.5 4z" fill="#666"/></svg><div class="a" style="left:1126px;top:156px;width:15px;height:449px;background:#DCDCDC"></div><div class="a" style="left:1126px;top:156px;width:15px;height:15px;background:#fff;border:1px solid #ABABAB"></div><svg class="a" style="left:1130px;top:161px" width="7" height="4" viewBox="0 0 7 4"><path d="M0 4L3.5 0 7 4z" fill="#666"/></svg><div class="a" style="left:1126px;top:388px;width:15px;height:31px;background:#fff;border:1px solid #ABABAB"></div><div class="a" style="left:1126px;top:604px;width:15px;height:15px;background:#fff;border:1px solid #ABABAB"></div><svg class="a" style="left:1130px;top:609px" width="7" height="4" viewBox="0 0 7 4"><path d="M0 0h7L3.5 4z" fill="#666"/></svg><svg class="a" style="left:1130px;top:624px" width="7" height="8" viewBox="0 0 7 8"><path d="M0 4L3.5 0 7 4zM0 8L3.5 4 7 8z" fill="#666"/></svg><svg class="a" style="left:1130px;top:642px" width="7" height="8" viewBox="0 0 7 8"><path d="M0 0h7L3.5 4zM0 4h7L3.5 8z" fill="#666"/></svg>
<svg width="0" height="0" style="position:absolute"><defs>
<linearGradient id="gWhite" x1="0" y1="0" x2="1" y2="0"><stop offset="0" stop-color="#DCDBD6"/><stop offset=".5" stop-color="#E8E7E3"/><stop offset="1" stop-color="#E3E2DE"/></linearGradient>
<linearGradient id="gWhite2" x1="0" y1="0" x2="1" y2="0"><stop offset="0" stop-color="#D7D6CF"/><stop offset=".6" stop-color="#E5E4DE"/><stop offset="1" stop-color="#DEDDD6"/></linearGradient>
<linearGradient id="gCream" x1="0" y1="0" x2="1" y2="0"><stop offset="0" stop-color="#D6CDB9"/><stop offset=".5" stop-color="#E0D7C4"/><stop offset="1" stop-color="#D9CFBB"/></linearGradient>
<linearGradient id="gCream2" x1="0" y1="0" x2="1" y2="0"><stop offset="0" stop-color="#D9CFBA"/><stop offset=".5" stop-color="#E2D9C6"/><stop offset="1" stop-color="#DBD1BC"/></linearGradient>
<linearGradient id="gTan" x1="0" y1="0" x2="1" y2="0"><stop offset="0" stop-color="#D3C6A2"/><stop offset=".5" stop-color="#DCD0AE"/><stop offset="1" stop-color="#D6C9A6"/></linearGradient>
<linearGradient id="gBlue" x1="0" y1="0" x2="0" y2="1"><stop offset="0" stop-color="#E6EDF2"/><stop offset=".5" stop-color="#A9C2D8"/><stop offset="1" stop-color="#7E9CBB"/></linearGradient>
</defs></svg><div class="a" style="left:198px;top:166px;width:880px;height:495px;overflow:hidden"><div class="a" style="left:0;top:0;width:880px;height:495px;background:linear-gradient(#252525 0%,#222 35%,#151515 75%,#0f0f0f 100%)"></div><div class="t" style="left:323px;top:14.01px;font-family:'Liberation Serif';font-size:23px;line-height:23px;color:#fff;font-weight:bold;font-style:italic;transform:scaleY(1.12);transform-origin:0 85%;-webkit-text-stroke-width:0.9px;letter-spacing:0.2px;letter-spacing:0">-3 Column Layout Page-</div><div class="t" style="left:9px;top:54.62px;font-family:'Liberation Serif';font-size:24px;line-height:24px;color:#fff;font-weight:bold;font-style:italic;transform:scaleY(1.12);transform-origin:0 85%;-webkit-text-stroke-width:0.9px;letter-spacing:0.2px">Reading <span style="color:#159BD6">Paragraph 1</span></div><div class="t" style="left:328px;top:54.62px;font-family:'Liberation Serif';font-size:24px;line-height:24px;color:#fff;font-weight:bold;font-style:italic;transform:scaleY(1.12);transform-origin:0 85%;-webkit-text-stroke-width:0.9px;letter-spacing:0.2px">Reading <span style="color:#159BD6">Paragraph 2</span></div><div class="t" style="left:645px;top:54.62px;font-family:'Liberation Serif';font-size:24px;line-height:24px;color:#fff;font-weight:bold;font-style:italic;transform:scaleY(1.12);transform-origin:0 85%;-webkit-text-stroke-width:0.9px;letter-spacing:0.2px">Reading <span style="color:#159BD6">Paragraph 3</span></div><svg class="a" style="left:0;top:0" width="880" height="495"><polygon points="35.20,84.50 37.25,89.98 43.09,90.24 38.52,93.88 40.08,99.51 35.20,96.29 30.32,99.51 31.88,93.88 27.31,90.24 33.15,89.98" fill="#fff"/><polygon points="118.30,84.50 120.35,89.98 126.19,90.24 121.62,93.88 123.18,99.51 118.30,96.29 113.42,99.51 114.98,93.88 110.41,90.24 116.25,89.98" fill="#fff"/><polygon points="200.20,84.50 202.25,89.98 208.09,90.24 203.52,93.88 205.08,99.51 200.20,96.29 195.32,99.51 196.88,93.88 192.31,90.24 198.15,89.98" fill="#fff"/><polygon points="356.60,84.50 358.65,89.98 364.49,90.24 359.92,93.88 361.48,99.51 356.60,96.29 351.72,99.51 353.28,93.88 348.71,90.24 354.55,89.98" fill="#fff"/><polygon points="439.50,84.50 441.55,89.98 447.39,90.24 442.82,93.88 444.38,99.51 439.50,96.29 434.62,99.51 436.18,93.88 431.61,90.24 437.45,89.98" fill="#fff"/><polygon points="521.00,84.50 523.05,89.98 528.89,90.24 524.32,93.88 525.88,99.51 521.00,96.29 516.12,99.51 517.68,93.88 513.11,90.24 518.95,89.98" fill="#fff"/><polygon points="673.70,84.50 675.75,89.98 681.59,90.24 677.02,93.88 678.58,99.51 673.70,96.29 668.82,99.51 670.38,93.88 665.81,90.24 671.65,89.98" fill="#fff"/><polygon points="756.00,84.50 758.05,89.98 763.89,90.24 759.32,93.88 760.88,99.51 756.00,96.29 751.12,99.51 752.68,93.88 748.11,90.24 753.95,89.98" fill="#fff"/><polygon points="838.00,84.50 840.05,89.98 845.89,90.24 841.32,93.88 842.88,99.51 838.00,96.29 833.12,99.51 834.68,93.88 830.11,90.24 835.95,89.98" fill="#fff"/></svg><div class="t" style="left:25px;top:132.07px;font-size:14.4px;line-height:14.4px;color:#159DD6;transform:scaleY(1.1);transform-origin:0 13.03px">This is a placeholder for</div><div class="t" style="left:25px;top:151.87px;font-size:14.4px;line-height:14.4px;color:#159DD6;transform:scaleY(1.1);transform-origin:0 13.03px">your text. This is here to</div><div class="t" style="left:25px;top:171.67px;font-size:14.4px;line-height:14.4px;color:#159DD6;transform:scaleY(1.1);transform-origin:0 13.03px">give you an idea of what</div><div class="t" style="left:25px;top:191.47px;font-size:14.4px;line-height:14.4px;color:#159DD6;transform:scaleY(1.1);transform-origin:0 13.03px">the text may look like in</div><div class="t" style="left:25px;top:211.27px;font-size:14.4px;line-height:14.4px;color:#159DD6;transform:scaleY(1.1);transform-origin:0 13.03px">an area that is dedicated</div><div class="t" style="left:25px;top:231.07px;font-size:14.4px;line-height:14.4px;color:#159DD6;transform:scaleY(1.1);transform-origin:0 13.03px">to text. Putting your text</div><div class="t" style="left:25px;top:250.87px;font-size:14.4px;line-height:14.4px;color:#159DD6;transform:scaleY(1.1);transform-origin:0 13.03px">here may look similar.</div><div class="t" style="left:25px;top:270.67px;font-size:14.4px;line-height:14.4px;color:#159DD6;transform:scaleY(1.1);transform-origin:0 13.03px">However it may not look</div><div class="t" style="left:25px;top:290.47px;font-size:14.4px;line-height:14.4px;color:#159DD6;transform:scaleY(1.1);transform-origin:0 13.03px">exact to this example.</div><div class="t" style="left:25px;top:330.07px;font-size:14.4px;line-height:14.4px;color:#159DD6;transform:scaleY(1.1);transform-origin:0 13.03px">This is a placeholder for</div><div class="t" style="left:25px;top:349.87px;font-size:14.4px;line-height:14.4px;color:#159DD6;transform:scaleY(1.1);transform-origin:0 13.03px">your text. This is here to</div><div class="t" style="left:25px;top:369.67px;font-size:14.4px;line-height:14.4px;color:#159DD6;transform:scaleY(1.1);transform-origin:0 13.03px">give you an idea of what</div><div class="t" style="left:25px;top:389.47px;font-size:14.4px;line-height:14.4px;color:#159DD6;transform:scaleY(1.1);transform-origin:0 13.03px">the text may look like in</div><div class="t" style="left:25px;top:409.27px;font-size:14.4px;line-height:14.4px;color:#159DD6;transform:scaleY(1.1);transform-origin:0 13.03px">an area that is dedicated</div><div class="t" style="left:25px;top:429.07px;font-size:14.4px;line-height:14.4px;color:#159DD6;transform:scaleY(1.1);transform-origin:0 13.03px">to text.</div><div class="t" style="left:360.5px;top:132.07px;font-size:14.4px;line-height:14.4px;color:#159DD6;transform:scaleY(1.1);transform-origin:0 13.03px">This is a placeholder for</div><div class="t" style="left:360.5px;top:151.87px;font-size:14.4px;line-height:14.4px;color:#159DD6;transform:scaleY(1.1);transform-origin:0 13.03px">your text. This is here to</div><div class="t" style="left:360.5px;top:171.67px;font-size:14.4px;line-height:14.4px;color:#159DD6;transform:scaleY(1.1);transform-origin:0 13.03px">give you an idea of what</div><div class="t" style="left:360.5px;top:191.47px;font-size:14.4px;line-height:14.4px;color:#159DD6;transform:scaleY(1.1);transform-origin:0 13.03px">the text may look like in</div><div class="t" style="left:360.5px;top:211.27px;font-size:14.4px;line-height:14.4px;color:#159DD6;transform:scaleY(1.1);transform-origin:0 13.03px">an area that is dedicated</div><div class="t" style="left:360.5px;top:231.07px;font-size:14.4px;line-height:14.4px;color:#159DD6;transform:scaleY(1.1);transform-origin:0 13.03px">to text. Putting your text</div><div class="t" style="left:360.5px;top:250.87px;font-size:14.4px;line-height:14.4px;color:#159DD6;transform:scaleY(1.1);transform-origin:0 13.03px">here may look similar.</div><div class="t" style="left:360.5px;top:270.67px;font-size:14.4px;line-height:14.4px;color:#159DD6;transform:scaleY(1.1);transform-origin:0 13.03px">However it may not look</div><div class="t" style="left:360.5px;top:290.47px;font-size:14.4px;line-height:14.4px;color:#159DD6;transform:scaleY(1.1);transform-origin:0 13.03px">exact to this example.</div><div class="t" style="left:360.5px;top:330.07px;font-size:14.4px;line-height:14.4px;color:#159DD6;transform:scaleY(1.1);transform-origin:0 13.03px">This is a placeholder for</div><div class="t" style="left:360.5px;top:349.87px;font-size:14.4px;line-height:14.4px;color:#159DD6;transform:scaleY(1.1);transform-origin:0 13.03px">your text. This is here to</div><div class="t" style="left:360.5px;top:369.67px;font-size:14.4px;line-height:14.4px;color:#159DD6;transform:scaleY(1.1);transform-origin:0 13.03px">give you an idea of what</div><div class="t" style="left:360.5px;top:389.47px;font-size:14.4px;line-height:14.4px;color:#159DD6;transform:scaleY(1.1);transform-origin:0 13.03px">the text may look like in</div><div class="t" style="left:360.5px;top:409.27px;font-size:14.4px;line-height:14.4px;color:#159DD6;transform:scaleY(1.1);transform-origin:0 13.03px">an area that is dedicated</div><div class="t" style="left:360.5px;top:429.07px;font-size:14.4px;line-height:14.4px;color:#159DD6;transform:scaleY(1.1);transform-origin:0 13.03px">to text.</div><div class="t" style="left:696px;top:132.07px;font-size:14.4px;line-height:14.4px;color:#159DD6;transform:scaleY(1.1);transform-origin:0 13.03px">This is a placeholder for</div><div class="t" style="left:696px;top:151.87px;font-size:14.4px;line-height:14.4px;color:#159DD6;transform:scaleY(1.1);transform-origin:0 13.03px">your text. This is here to</div><div class="t" style="left:696px;top:171.67px;font-size:14.4px;line-height:14.4px;color:#159DD6;transform:scaleY(1.1);transform-origin:0 13.03px">give you an idea of what</div><div class="t" style="left:696px;top:191.47px;font-size:14.4px;line-height:14.4px;color:#159DD6;transform:scaleY(1.1);transform-origin:0 13.03px">the text may look like in</div><div class="t" style="left:696px;top:211.27px;font-size:14.4px;line-height:14.4px;color:#159DD6;transform:scaleY(1.1);transform-origin:0 13.03px">an area that is dedicated</div><div class="t" style="left:696px;top:231.07px;font-size:14.4px;line-height:14.4px;color:#159DD6;transform:scaleY(1.1);transform-origin:0 13.03px">to text. Putting your text</div><div class="t" style="left:696px;top:250.87px;font-size:14.4px;line-height:14.4px;color:#159DD6;transform:scaleY(1.1);transform-origin:0 13.03px">here may look similar.</div><div class="t" style="left:696px;top:270.67px;font-size:14.4px;line-height:14.4px;color:#159DD6;transform:scaleY(1.1);transform-origin:0 13.03px">However it may not look</div><div class="t" style="left:696px;top:290.47px;font-size:14.4px;line-height:14.4px;color:#159DD6;transform:scaleY(1.1);transform-origin:0 13.03px">exact to this example.</div><div class="t" style="left:696px;top:330.07px;font-size:14.4px;line-height:14.4px;color:#159DD6;transform:scaleY(1.1);transform-origin:0 13.03px">This is a placeholder for</div><div class="t" style="left:696px;top:349.87px;font-size:14.4px;line-height:14.4px;color:#159DD6;transform:scaleY(1.1);transform-origin:0 13.03px">your text. This is here to</div><div class="t" style="left:696px;top:369.67px;font-size:14.4px;line-height:14.4px;color:#159DD6;transform:scaleY(1.1);transform-origin:0 13.03px">give you an idea of what</div><div class="t" style="left:696px;top:389.47px;font-size:14.4px;line-height:14.4px;color:#159DD6;transform:scaleY(1.1);transform-origin:0 13.03px">the text may look like in</div><div class="t" style="left:696px;top:409.27px;font-size:14.4px;line-height:14.4px;color:#159DD6;transform:scaleY(1.1);transform-origin:0 13.03px">an area that is dedicated</div><div class="t" style="left:696px;top:429.07px;font-size:14.4px;line-height:14.4px;color:#159DD6;transform:scaleY(1.1);transform-origin:0 13.03px">to text.</div><svg class="a" style="left:0;top:0" width="880" height="495"><polygon points="329,456 348,447 348,495 329,495" fill="url(#gBlue)" /><path transform="translate(-198,-166)" d="M398 637 L530 641 L528 661 L395 661 Q394 648 398 637z" fill="url(#gCream)"/><polygon points="200,471 332,475 332,477 199,473" fill="#EFE9DA" /><polygon points="313,445 348,433 335,478 313,480" fill="#F2F1EE" /><path transform="translate(-198,-166)" d="M412 608 L512 611 L512 646 L411 643 Q409 626 412 608z" fill="url(#gWhite)"/><polygon points="213,476 314,479 314,481 213,478" fill="#9d978a" /><path transform="translate(-198,-166)" d="M401 580 L537 585 L536 611 L400 607 Q399 594 401 580z" fill="url(#gCream2)"/><polygon points="202,417 204,417 204,440 202,440" fill="#C8402E" /><polygon points="202,440 338,443 338,445 202,442" fill="#8f8774" /><polygon points="326,375 342,377 346,420 326,419" fill="#F0EEEA" /><path transform="translate(-198,-166)" d="M401 556 L526 559 L526 582 L401 579 Q399 568 401 556z" fill="#2E3A4A"/><path transform="translate(-198,-166)" d="M403 556.5 L526 559.5 L525.5 580 L403 577 Q401 567 403 556.5z" fill="url(#gWhite)"/><path transform="translate(-198,-166)" d="M401 536 L527 540 L526 561 L401 557 Q399 546 401 536z" fill="url(#gWhite2)"/><polygon points="205,369 329,372 329,375 205,372" fill="#C77A5A" /><path transform="translate(-198,-166)" d="M401 556.5 L525 559.5 L525 560.8 L401 557.8z" fill="#56606c"/><path transform="translate(-198,-166)" d="M411 505 L536 507 L535 541 L410 538 Q408 521 411 505z" fill="url(#gWhite)"/><polygon points="213,338 338,340 338,342 213,340" fill="#35352f" /><polygon points="212,371 337,374 337,376 212,373" fill="#6f6a60" /><polygon points="214,312 219,303 219,339 215,336" fill="#F1EFEA" /><polygon points="219,303 338,305 338,341 219,339" fill="url(#gTan)" /><polygon points="219,337 338,339 338,341 219,339" fill="#5f5a4f" /><polygon points="329,268 342,263 344,304 330,308" fill="#F4EEE6" /><path transform="translate(-198,-166)" d="M395 432 L527 434 L528 474 L394 467 Q392 450 395 432z" fill="url(#gCream)"/><polygon points="196,299 330,306 330,308 196,301" fill="#a0978a" /><polygon points="199,262 206,254 206,266" fill="#EEEDEA" /><polygon points="326,255 342,252 339,268 326,272" fill="#F1F0ED" /><path transform="translate(-198,-166)" d="M405 418 L526 421 L524 438 L404 436 Q402 427 405 418z" fill="url(#gWhite2)"/><polygon points="210,250 328,253 328,255 208,252" fill="#B8705A" /><path transform="translate(-198,-166)" d="M417 383 L540 385 L541 418 L416 417 Q413 400 417 383z" fill="url(#gWhite)"/><polygon points="339,239 343,238 345,254 339,253" fill="#EEEDEA" /><polygon points="221,210 344,212 343,219 219,217" fill="#2A3031" /><polygon points="218,249 343,251 343,253 218,252" fill="#40464c" /><polygon points="664,456 683,447 683,495 664,495" fill="url(#gBlue)" /><path transform="translate(137,-166)" d="M398 637 L530 641 L528 661 L395 661 Q394 648 398 637z" fill="url(#gCream)"/><polygon points="535,471 667,475 667,477 534,473" fill="#EFE9DA" /><polygon points="648,445 683,433 670,478 648,480" fill="#F2F1EE" /><path transform="translate(137,-166)" d="M412 608 L512 611 L512 646 L411 643 Q409 626 412 608z" fill="url(#gWhite)"/><polygon points="548,476 649,479 649,481 548,478" fill="#9d978a" /><path transform="translate(137,-166)" d="M401 580 L537 585 L536 611 L400 607 Q399 594 401 580z" fill="url(#gCream2)"/><polygon points="537,417 539,417 539,440 537,440" fill="#C8402E" /><polygon points="537,440 673,443 673,445 537,442" fill="#8f8774" /><polygon points="661,375 677,377 681,420 661,419" fill="#F0EEEA" /><path transform="translate(137,-166)" d="M401 556 L526 559 L526 582 L401 579 Q399 568 401 556z" fill="#2E3A4A"/><path transform="translate(137,-166)" d="M403 556.5 L526 559.5 L525.5 580 L403 577 Q401 567 403 556.5z" fill="url(#gWhite)"/><path transform="translate(137,-166)" d="M401 536 L527 540 L526 561 L401 557 Q399 546 401 536z" fill="url(#gWhite2)"/><polygon points="540,369 664,372 664,375 540,372" fill="#C77A5A" /><path transform="translate(137,-166)" d="M401 556.5 L525 559.5 L525 560.8 L401 557.8z" fill="#56606c"/><path transform="translate(137,-166)" d="M411 505 L536 507 L535 541 L410 538 Q408 521 411 505z" fill="url(#gWhite)"/><polygon points="548,338 673,340 673,342 548,340" fill="#35352f" /><polygon points="547,371 672,374 672,376 547,373" fill="#6f6a60" /><polygon points="549,312 554,303 554,339 550,336" fill="#F1EFEA" /><polygon points="554,303 673,305 673,341 554,339" fill="url(#gTan)" /><polygon points="554,337 673,339 673,341 554,339" fill="#5f5a4f" /><polygon points="664,268 677,263 679,304 665,308" fill="#F4EEE6" /><path transform="translate(137,-166)" d="M395 432 L527 434 L528 474 L394 467 Q392 450 395 432z" fill="url(#gCream)"/><polygon points="531,299 665,306 665,308 531,301" fill="#a0978a" /><polygon points="534,262 541,254 541,266" fill="#EEEDEA" /><polygon points="661,255 677,252 674,268 661,272" fill="#F1F0ED" /><path transform="translate(137,-166)" d="M405 418 L526 421 L524 438 L404 436 Q402 427 405 418z" fill="url(#gWhite2)"/><polygon points="545,250 663,253 663,255 543,252" fill="#B8705A" /><path transform="translate(137,-166)" d="M417 383 L540 385 L541 418 L416 417 Q413 400 417 383z" fill="url(#gWhite)"/><polygon points="674,239 678,238 680,254 674,253" fill="#EEEDEA" /><polygon points="556,210 679,212 678,219 554,217" fill="#2A3031" /><polygon points="553,249 678,251 678,253 553,252" fill="#40464c" /></svg></div>
<div class="a" style="left:1px;top:678px;width:1141px;height:22px;background:#F1F1F1;border-top:1px solid #D4D4D4"></div>
<div class="t" style="left:8px;top:682.60px;font-size:11.7px;line-height:11.7px;color:#444;">Slide 8 of 14</div><svg class="a" style="left:623px;top:683px" width="13" height="12" viewBox="0 0 13 12"><path d="M3.5 0.5L6.5 3.5 9.5 0.5" fill="none" stroke="#666" transform="rotate(180 6.5 2)"/><path d="M0 6h13M0 8.5h13M0 11h13" stroke="#666"/></svg><div class="t" style="left:640px;top:682.60px;font-size:11.7px;line-height:11.7px;color:#444;">Notes</div><svg class="a" style="left:690px;top:683px" width="13" height="12" viewBox="0 0 13 12"><path d="M0.5 0.5h12v8H5l-3 3v-3H0.5z" fill="#666"/></svg><div class="t" style="left:707px;top:682.60px;font-size:11.7px;line-height:11.7px;color:#444;">Comments</div><div class="a" style="left:780px;top:679px;width:38px;height:21px;background:#D6D6D6"></div><svg class="a" style="left:792px;top:683px" width="15" height="13" viewBox="0 0 15 13"><rect x="0.5" y="0.5" width="14" height="12" fill="none" stroke="#666"/><rect x="3.5" y="2.5" width="9" height="6" fill="none" stroke="#666"/><path d="M3 10.5h9" stroke="#666"/></svg><svg class="a" style="left:830px;top:683px" width="14" height="13" viewBox="0 0 14 13"><rect x="0.5" y="0.5" width="5" height="4.5" fill="none" stroke="#666"/><rect x="8.5" y="0.5" width="5" height="4.5" fill="none" stroke="#666"/><rect x="0.5" y="7.5" width="5" height="4.5" fill="none" stroke="#666"/><rect x="8.5" y="7.5" width="5" height="4.5" fill="none" stroke="#666"/></svg><svg class="a" style="left:868px;top:683px" width="14" height="13" viewBox="0 0 14 13"><path d="M0.5 1.5c2-1 4.5-1 6.5 0.5 2-1.5 4.5-1.5 6.5-0.5v10c-2-1-4.5-1-6.5 0.5-2-1.5-4.5-1.5-6.5-0.5z" fill="none" stroke="#666"/><path d="M7 2v10M2 4h3M2 6h3M2 8h3M9 4h3M9 6h3M9 8h3" stroke="#666"/></svg><svg class="a" style="left:906px;top:683px" width="14" height="13" viewBox="0 0 14 13"><path d="M0 0.5h14M1.5 0.5v6h11v-6" fill="none" stroke="#666"/><path d="M3 3h8" stroke="#666"/><path d="M7 6.5v3M4 12.5l3-3 3 3" fill="none" stroke="#666"/></svg><div class="a" style="left:937px;top:688px;width:6px;height:2px;background:#666"></div><div class="a" style="left:947px;top:688px;width:101px;height:1px;background:#A0A0A0"></div><div class="a" style="left:997px;top:685px;width:1px;height:6px;background:#A0A0A0"></div><div class="a" style="left:979px;top:683px;width:4px;height:11px;background:#666"></div><svg class="a" style="left:1053px;top:685px" width="8" height="8" viewBox="0 0 8 8"><path d="M4 0v8M0 4h8" stroke="#666" stroke-width="2"/></svg><div class="t" style="left:1075px;top:682.60px;font-size:11.7px;line-height:11.7px;color:#444;">68%</div><svg class="a" style="left:1111px;top:683px" width="13" height="13" viewBox="0 0 13 13"><rect x="0.5" y="0.5" width="12" height="12" fill="none" stroke="#777"/><path d="M6.5 2v3M6.5 8v3M2 6.5h3M8 6.5h3" stroke="#777"/><path d="M5.5 3l1-1 1 1M5.5 10l1 1 1-1M3 5.5l-1 1 1 1M10 5.5l1 1-1 1" fill="none" stroke="#777"/></svg>
</body></html>
